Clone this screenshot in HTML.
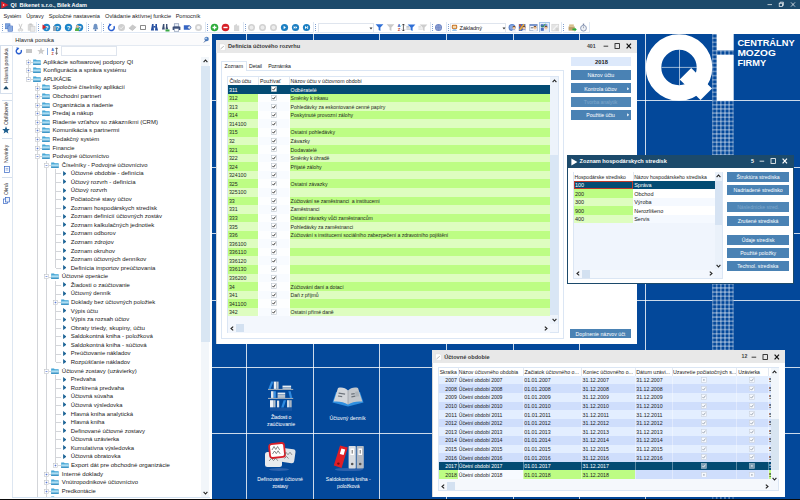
<!DOCTYPE html>
<html><head><meta charset="utf-8"><title>QI Bikenet s.r.o.</title>
<style>
html,body{margin:0;padding:0;width:800px;height:500px;overflow:hidden;background:#fff;}
body{position:relative;font-family:"Liberation Sans",sans-serif;}
div,svg{position:absolute;}
.t{white-space:nowrap;}
</style></head><body>
<div style="left:0.00px;top:0.00px;width:800.00px;height:500.00px;background:#ffffff;"></div>
<div style="left:0.00px;top:0.00px;width:800.00px;height:9.00px;background:#1c4a6b;"></div>
<svg style="left:1px;top:0.5px" width="8" height="8" viewBox="0 0 8 8"><path d="M0.3 0.2 L7.6 4 L0.3 7.8 Z" fill="#e0202a"/><circle cx="2.6" cy="4" r="0.8" fill="#fff"/></svg>
<div class="t" style="left:10.60px;top:-0.40px;height:10px;line-height:10px;font-size:5.54px;color:#fff;font-weight:bold;letter-spacing:0.000px;white-space:pre;">QI  Bikenet s.r.o., Bílek Adam</div>
<svg style="left:764px;top:0px" width="36" height="9" viewBox="0 0 36 9"><g stroke="#fff" stroke-width="0.7" fill="none"><path d="M3.5 4.6h4.5"/><rect x="15.2" y="3.2" width="3.2" height="3.2"/><path d="M16.2 3.2v-1h3.2v3.2h-1"/><path d="M27 2.4l4 4.2M31 2.4l-4 4.2"/></g></svg>
<div class="t" style="left:3.50px;top:10.80px;height:10px;line-height:10px;font-size:5.64px;color:#222;letter-spacing:-0.201px;">Systém</div>
<div class="t" style="left:26.20px;top:10.80px;height:10px;line-height:10px;font-size:5.64px;color:#222;letter-spacing:-0.053px;">Úpravy</div>
<div class="t" style="left:48.70px;top:10.80px;height:10px;line-height:10px;font-size:5.64px;color:#222;letter-spacing:-0.059px;">Spoločné nastavenia</div>
<div class="t" style="left:105.00px;top:10.80px;height:10px;line-height:10px;font-size:5.68px;color:#222;letter-spacing:0.000px;">Ovládanie aktívnej funkcie</div>
<div class="t" style="left:175.70px;top:10.80px;height:10px;line-height:10px;font-size:5.64px;color:#222;letter-spacing:-0.068px;">Pomocník</div>
<div style="left:1.50px;top:23.5px;width:1px;height:8px;background:repeating-linear-gradient(to bottom,#7f9fd0 0,#7f9fd0 1px,transparent 1px,transparent 2px);"></div>
<svg style="left:5px;top:23px" width="9" height="9" viewBox="0 0 9 9"><rect x="0.6" y="0.8" width="4.4" height="5" fill="#7fa6e0" stroke="#3f6fc0" stroke-width="0.6"/><rect x="3" y="3" width="4.6" height="5.2" fill="#a9c4ee" stroke="#3560b8" stroke-width="0.6"/><path d="M3.8 4.6h3M3.8 5.8h3M3.8 7h3" stroke="#3f6fc0" stroke-width="0.4"/></svg>
<svg style="left:15.5px;top:23px" width="9" height="9" viewBox="0 0 9 9"><path d="M3 0.8L5 6M6 0.8L4 6" stroke="#b8b8b8" stroke-width="0.7" fill="none"/><circle cx="3.2" cy="7" r="1" fill="none" stroke="#b8b8b8" stroke-width="0.6"/><circle cx="5.8" cy="7" r="1" fill="none" stroke="#b8b8b8" stroke-width="0.6"/></svg>
<svg style="left:26.5px;top:23px" width="9" height="9" viewBox="0 0 9 9"><rect x="0.8" y="1.2" width="5.5" height="6.5" fill="#d8d8d8"/><rect x="3.2" y="3.2" width="4.8" height="5" fill="#e9e9e9" stroke="#c4c4c4" stroke-width="0.5"/><rect x="2.3" y="0.5" width="2.5" height="1.5" fill="#c4c4c4"/></svg>
<div style="left:38.20px;top:23.5px;width:1px;height:8px;background:repeating-linear-gradient(to bottom,#7f9fd0 0,#7f9fd0 1px,transparent 1px,transparent 2px);"></div>
<svg style="left:42.20px;top:23.10px" width="9" height="9" viewBox="-4.5 -4.5 9 9"><circle r="3.7" fill="#1d84c8"/><text x="0" y="2.1" font-size="6" font-weight="bold" text-anchor="middle" fill="#fff" font-family="Liberation Sans,sans-serif">?</text></svg>
<svg style="left:53.00px;top:23.10px" width="9" height="9" viewBox="-4.5 -4.5 9 9"><circle r="3.7" fill="#1d84c8"/><text x="0" y="2.1" font-size="6" font-weight="bold" text-anchor="middle" fill="#fff" font-family="Liberation Sans,sans-serif">?</text></svg>
<svg style="left:63.80px;top:23.10px" width="9" height="9" viewBox="-4.5 -4.5 9 9"><circle r="3.7" fill="#1d84c8"/><text x="0" y="2.1" font-size="6" font-weight="bold" text-anchor="middle" fill="#fff" font-family="Liberation Sans,sans-serif">?</text></svg>
<svg style="left:74.80px;top:23.10px" width="9" height="9" viewBox="-4.5 -4.5 9 9"><circle r="3.7" fill="#1d84c8"/><text x="0" y="2.1" font-size="6" font-weight="bold" text-anchor="middle" fill="#fff" font-family="Liberation Sans,sans-serif">?</text></svg>
<svg style="left:41.5px;top:24px" width="5" height="6" viewBox="0 0 5 6"><path d="M0.5 0.5L4.5 3L0.5 5.5Z" fill="#d8232a"/></svg>
<div style="left:52.5px;top:25.5px;width:3.5px;height:5px;background:#9aa6b4;"></div>
<div style="left:75.5px;top:24.5px;width:3.4px;height:3.4px;border-radius:2px;background:#e9b98a;"></div><div style="left:75px;top:28px;width:4.4px;height:3px;border-radius:1.5px 1.5px 0 0;background:#58b04a;"></div>
<div style="left:87.50px;top:23.5px;width:1px;height:8px;background:repeating-linear-gradient(to bottom,#7f9fd0 0,#7f9fd0 1px,transparent 1px,transparent 2px);"></div>
<svg style="left:90.5px;top:23.2px" width="9" height="9" viewBox="0 0 9 9"><path d="M4.5 0.8C2.8 0.8 2.5 2.5 2.5 4.2L1.8 6.3H7.2L6.5 4.2C6.5 2.5 6.2 0.8 4.5 0.8Z" fill="#6f93c4"/><circle cx="4.5" cy="7.2" r="0.9" fill="#4b6fa5"/></svg>
<div style="left:103.20px;top:23.5px;width:1px;height:8px;background:repeating-linear-gradient(to bottom,#7f9fd0 0,#7f9fd0 1px,transparent 1px,transparent 2px);"></div>
<svg style="left:107px;top:23.2px" width="9" height="9" viewBox="0 0 9 9"><path d="M6.9 3.2A2.9 2.9 0 1 1 3.4 1.9" fill="none" stroke="#2a5fd0" stroke-width="1.5"/><path d="M1.8 0.6L4.8 1.2L2.6 3.6Z" fill="#2a5fd0"/></svg>
<svg style="left:117.20px;top:23.10px" width="9" height="9" viewBox="-4.5 -4.5 9 9"><circle r="3.5" fill="#cfcfcf"/><path d="M-1.6 0L-0.4 1.3L1.8 -1.2" stroke="#f4f4f4" stroke-width="0.9" fill="none"/></svg>
<svg style="left:128px;top:23.2px" width="9" height="9" viewBox="0 0 9 9"><path d="M0.8 5L4.5 1.5L8.2 4L4.5 7.5Z" fill="#c9c9c9"/><path d="M0.8 5L4.5 7.5L8.2 4" fill="none" stroke="#aaa" stroke-width="0.5"/></svg>
<div style="left:139.8px;top:24.6px;width:6.4px;height:5.6px;border:0.8px solid #8a8a8a;box-sizing:border-box;background:#fff;border-radius:0.8px"></div>
<svg style="left:150px;top:23.2px" width="9" height="9" viewBox="0 0 9 9"><path d="M2 1h1.6v2.5L4 7.6H0.9L1.6 3.5Z M5.4 1H7v2.5L8.1 7.6H5L5.4 3.5Z" fill="#254fa0"/><rect x="3.4" y="3" width="2.2" height="1.6" fill="#254fa0"/></svg>
<svg style="left:160.5px;top:23.2px" width="9" height="9" viewBox="0 0 9 9"><path d="M2 1h1.4v2.2L3.8 6.4H1L1.6 3.2Z M5 1h1.4v2.2L7.2 6.4H4.6L5 3.2Z" fill="#3a4f74"/><path d="M4.5 6.5h4v2h-4z" fill="#3aa845"/></svg>
<svg style="left:171.8px;top:23.2px" width="9" height="9" viewBox="0 0 9 9"><rect x="2.2" y="0.8" width="4.6" height="3" fill="#e8eef8" stroke="#5a6f95" stroke-width="0.5"/><rect x="0.6" y="3.4" width="7.8" height="3.6" rx="0.6" fill="#3d4f78"/><rect x="2.2" y="5.6" width="4.6" height="2.6" fill="#fff" stroke="#5a6f95" stroke-width="0.5"/></svg>
<svg style="left:183px;top:23.2px" width="9" height="9" viewBox="0 0 9 9"><path d="M0.8 2.2h5.5L8.4 4.5L6.3 6.8H0.8Z" fill="#3565c4"/><circle cx="6.3" cy="4.5" r="1.6" fill="#e8eef8" stroke="#27488f" stroke-width="0.5"/></svg>
<svg style="left:194.20px;top:23.10px" width="9" height="9" viewBox="-4.5 -4.5 9 9"><circle r="3.5" fill="#d4d4d4"/><circle r="1.7" fill="#f6f6f6"/></svg>
<div style="left:206.50px;top:23.5px;width:1px;height:8px;background:repeating-linear-gradient(to bottom,#7f9fd0 0,#7f9fd0 1px,transparent 1px,transparent 2px);"></div>
<svg style="left:209.70px;top:23.10px" width="9" height="9" viewBox="-4.5 -4.5 9 9"><circle r="3.8" fill="#2cab3a"/><path d="M-2 0H2M0 -2V2" stroke="#fff" stroke-width="1.3"/></svg>
<svg style="left:220.50px;top:23.10px" width="9" height="9" viewBox="-4.5 -4.5 9 9"><circle r="3.8" fill="#d62027"/><path d="M-2.1 0H2.1" stroke="#fff" stroke-width="1.4"/></svg>
<svg style="left:231.5px;top:23.2px" width="9" height="9" viewBox="0 0 9 9"><path d="M2 2.5L5 0.8V2.5H7.2V8H2Z" fill="#d6d6d6"/></svg>
<div style="left:244.50px;top:23.5px;width:1px;height:8px;background:repeating-linear-gradient(to bottom,#7f9fd0 0,#7f9fd0 1px,transparent 1px,transparent 2px);"></div>
<svg style="left:247.20px;top:23.10px" width="9" height="9" viewBox="-4.5 -4.5 9 9"><circle r="3.5" fill="#d2d2d2"/><circle r="1.9" fill="#ececec"/></svg>
<svg style="left:258.00px;top:23.10px" width="9" height="9" viewBox="-4.5 -4.5 9 9"><circle r="3.5" fill="#d2d2d2"/><circle r="1.9" fill="#ececec"/></svg>
<svg style="left:268.70px;top:23.10px" width="9" height="9" viewBox="-4.5 -4.5 9 9"><circle r="3.5" fill="#d2d2d2"/><circle r="1.9" fill="#ececec"/></svg>
<svg style="left:280.00px;top:23.10px" width="9" height="9" viewBox="-4.5 -4.5 9 9"><circle r="3.6" fill="#1c7fc2"/><path d="M-0.9 -1.7L1.4 0L-0.9 1.7Z" fill="#fff"/></svg>
<svg style="left:291.00px;top:23.10px" width="9" height="9" viewBox="-4.5 -4.5 9 9"><circle r="3.6" fill="#1c7fc2"/><path d="M-1.8 -1.5L-0.1 0L-1.8 1.5Z M0.1 -1.5L1.8 0L0.1 1.5Z" fill="#fff"/></svg>
<svg style="left:302.00px;top:23.10px" width="9" height="9" viewBox="-4.5 -4.5 9 9"><circle r="3.6" fill="#1c7fc2"/><path d="M-1.5 -1.5L0.6 0L-1.5 1.5Z M0.8 -1.5h0.8v3h-0.8z" fill="#fff"/></svg>
<div style="left:315.00px;top:23.5px;width:1px;height:8px;background:repeating-linear-gradient(to bottom,#7f9fd0 0,#7f9fd0 1px,transparent 1px,transparent 2px);"></div>
<div style="left:317.50px;top:22.60px;width:56.30px;height:10.00px;background:#fff;border:0.6px solid #dfe5ee;box-sizing:border-box;"></div>
<svg style="left:369px;top:26.6px" width="4" height="3" viewBox="0 0 4 3"><path d="M0.5 0.6L3.5 0.6L2 2.4Z" fill="#333"/></svg>
<svg style="left:374.70px;top:23.2px" width="9" height="9" viewBox="0 0 9 9"><path d="M0.6 1.2H8.4L5.4 4.6V8L3.6 7V4.6Z" fill="#2f6fd6"/></svg>
<svg style="left:386.00px;top:23.2px" width="9" height="9" viewBox="0 0 9 9"><path d="M0.6 1.2H8.4L5.4 4.6V8L3.6 7V4.6Z" fill="#c9c9c9"/></svg>
<svg style="left:397px;top:23.2px" width="9" height="9" viewBox="0 0 9 9"><text x="0.6" y="4" font-size="4.2" font-weight="bold" fill="#2f5fc0" font-family="Liberation Sans,sans-serif">A</text><text x="0.8" y="8.3" font-size="4.2" font-weight="bold" fill="#c0392b" font-family="Liberation Sans,sans-serif">Z</text><path d="M6.4 1V8M5.1 2.3L6.4 1L7.7 2.3M5.1 6.7L6.4 8L7.7 6.7" stroke="#222" stroke-width="0.7" fill="none"/></svg>
<svg style="left:406.2px;top:23.2px" width="10" height="9" viewBox="0 0 10 9"><path d="M1.6 1.6H9.4L6.6 4.6V8L4.6 7V4.6Z" fill="#2f6fd6"/><path d="M0.4 3.4h2.6M0.4 4.8h3.2M0.4 6.2h3.6" stroke="#8a93a0" stroke-width="0.6"/></svg>
<svg style="left:418px;top:23.2px" width="10" height="9" viewBox="0 0 10 9"><path d="M1.6 1.6H9.4L6.6 4.6V8L4.6 7V4.6Z" fill="#cdcdcd"/><path d="M0.4 3.4h2.6M0.4 4.8h3.2M0.4 6.2h3.6" stroke="#c4c4c4" stroke-width="0.6"/></svg>
<div style="left:431.50px;top:23.5px;width:1px;height:8px;background:repeating-linear-gradient(to bottom,#7f9fd0 0,#7f9fd0 1px,transparent 1px,transparent 2px);"></div>
<svg style="left:434.20px;top:23.10px" width="9" height="9" viewBox="-4.5 -4.5 9 9"><circle r="3.5" fill="#6f86c4"/><circle r="2.5" fill="#93a6d6"/><path d="M-2.4 0H2.4M0 -2.4V2.4" stroke="#6f86c4" stroke-width="0.5"/><ellipse rx="1.1" ry="2.4" fill="none" stroke="#6f86c4" stroke-width="0.4"/></svg>
<div style="left:447.50px;top:23.5px;width:1px;height:8px;background:repeating-linear-gradient(to bottom,#7f9fd0 0,#7f9fd0 1px,transparent 1px,transparent 2px);"></div>
<div style="left:450.00px;top:22.60px;width:56.00px;height:10.00px;background:#fff;border:0.6px solid #dfe5ee;box-sizing:border-box;"></div>
<svg style="left:451px;top:24.2px" width="7" height="7" viewBox="0 0 7 7"><rect x="0.8" y="0.8" width="5.4" height="4.2" rx="1.2" fill="#c9772a"/><rect x="1.8" y="1.8" width="3.4" height="2.4" rx="0.6" fill="#f3d9b0"/><path d="M1 6.6C1 5 6 5 6 6.6Z" fill="#3f8fd8"/></svg>
<div class="t" style="left:459.50px;top:22.60px;height:10px;line-height:10px;font-size:5.64px;color:#222;letter-spacing:-0.055px;">Základný</div>
<svg style="left:501.5px;top:26.6px" width="4" height="3" viewBox="0 0 4 3"><path d="M0.5 0.6L3.5 0.6L2 2.4Z" fill="#333"/></svg>
<svg style="left:508px;top:23.2px" width="9" height="9" viewBox="0 0 9 9"><circle cx="4" cy="4.4" r="3.5" fill="#5c84cc"/><circle cx="4" cy="4.4" r="2.4" fill="#86a8e0"/><circle cx="6" cy="4.9" r="1.5" fill="#f1c9a2"/><path d="M4.4 4.6C4.4 2.6 7.6 2.6 7.6 4.6C7 3.8 5 3.8 4.4 4.6Z" fill="#7a4a22"/><path d="M3.8 8.4C3.8 6.2 8.2 6.2 8.2 8.4Z" fill="#e8eef8"/></svg>
<svg style="left:518px;top:23.2px" width="9" height="9" viewBox="0 0 9 9"><rect x="0.8" y="1" width="6.6" height="7" fill="#4a6cc0"/><path d="M1 6.4L5.4 0.8L6.8 1.8L2.4 7.4Z" fill="#e9a93a"/><path d="M1 1.4h2v2h-2z" fill="#c8502a"/><circle cx="6" cy="4.9" r="1.5" fill="#f1c9a2"/><path d="M4.4 4.6C4.4 2.6 7.6 2.6 7.6 4.6C7 3.8 5 3.8 4.4 4.6Z" fill="#7a4a22"/><path d="M3.8 8.4C3.8 6.2 8.2 6.2 8.2 8.4Z" fill="#e8eef8"/></svg>
<svg style="left:529.2px;top:23.2px" width="9" height="9" viewBox="0 0 9 9"><rect x="0.8" y="1.4" width="7.4" height="6.4" fill="#f4f7fc" stroke="#7f93b8" stroke-width="0.6"/><rect x="0.8" y="1.4" width="7.4" height="1.4" fill="#5c7fc4"/><path d="M1.8 4.8h2.4" stroke="#333" stroke-width="0.7"/><circle cx="6" cy="4.9" r="1.5" fill="#f1c9a2"/><path d="M4.4 4.6C4.4 2.6 7.6 2.6 7.6 4.6C7 3.8 5 3.8 4.4 4.6Z" fill="#7a4a22"/><path d="M3.8 8.4C3.8 6.2 8.2 6.2 8.2 8.4Z" fill="#e8eef8"/></svg>
<div style="left:539.20px;top:22.40px;width:10.80px;height:10.60px;background:#e6f0fc;border:0.6px solid #a9c6ea;box-sizing:border-box;"></div>
<svg style="left:540.2px;top:23.2px" width="9" height="9" viewBox="0 0 9 9"><rect x="0.8" y="1.2" width="3" height="3" fill="#4a6cc0"/><rect x="0.8" y="4.8" width="3" height="3" fill="#4a6cc0"/><rect x="4.4" y="1.2" width="3" height="3" fill="#6f8fd4"/><path d="M1.2 2.6L2.6 4.2L5.4 0.8" stroke="#2a9a3a" stroke-width="1" fill="none"/><circle cx="6" cy="4.9" r="1.5" fill="#f1c9a2"/><path d="M4.4 4.6C4.4 2.6 7.6 2.6 7.6 4.6C7 3.8 5 3.8 4.4 4.6Z" fill="#7a4a22"/><path d="M3.8 8.4C3.8 6.2 8.2 6.2 8.2 8.4Z" fill="#e8eef8"/></svg>
<svg style="left:551px;top:23.2px" width="9" height="9" viewBox="0 0 9 9"><rect x="0.8" y="1.2" width="7" height="6.8" fill="#e4e4e4" stroke="#cfcfcf" stroke-width="0.5"/><path d="M2 6.8L6.6 2.2" stroke="#f6f6f6" stroke-width="1.2"/><rect x="4.6" y="4.8" width="3" height="3" fill="#d2d2d2"/></svg>
<div style="left:563.20px;top:23.5px;width:1px;height:8px;background:repeating-linear-gradient(to bottom,#7f9fd0 0,#7f9fd0 1px,transparent 1px,transparent 2px);"></div>
<svg style="left:567.5px;top:23.2px" width="9" height="9" viewBox="0 0 9 9"><rect x="0.6" y="3.4" width="6" height="4.2" fill="#c2a26e"/><rect x="1.2" y="1.4" width="4.6" height="2.2" fill="#d8c08e"/><path d="M0.6 5.2h6" stroke="#a88a58" stroke-width="0.4"/><path d="M4.4 5.6h2.2V4.4L8.8 6.4L6.6 8.4V7.2H4.4Z" fill="#2cab3a"/></svg>
<svg style="left:578.5px;top:23.2px" width="9" height="9" viewBox="0 0 9 9"><circle cx="4.5" cy="5.2" r="2.9" fill="#eef1f6" stroke="#8e9bb8" stroke-width="1"/><rect x="3.8" y="0.6" width="1.4" height="1.5" fill="#7a86a5"/><path d="M4.5 5.2V3.4" stroke="#5a6375" stroke-width="0.5"/></svg>
<div style="left:0.50px;top:22.00px;width:36.80px;height:11.20px;border:0.6px solid #dfe8f4;border-top:none;border-left:none;border-radius:0 0 1.5px 0;box-sizing:border-box;"></div>
<div style="left:38.00px;top:22.00px;width:48.50px;height:11.20px;border:0.6px solid #dfe8f4;border-top:none;border-left:none;border-radius:0 0 1.5px 0;box-sizing:border-box;"></div>
<div style="left:87.30px;top:22.00px;width:15.00px;height:11.20px;border:0.6px solid #dfe8f4;border-top:none;border-left:none;border-radius:0 0 1.5px 0;box-sizing:border-box;"></div>
<div style="left:103.00px;top:22.00px;width:102.60px;height:11.20px;border:0.6px solid #dfe8f4;border-top:none;border-left:none;border-radius:0 0 1.5px 0;box-sizing:border-box;"></div>
<div style="left:206.30px;top:22.00px;width:37.50px;height:11.20px;border:0.6px solid #dfe8f4;border-top:none;border-left:none;border-radius:0 0 1.5px 0;box-sizing:border-box;"></div>
<div style="left:244.40px;top:22.00px;width:69.80px;height:11.20px;border:0.6px solid #dfe8f4;border-top:none;border-left:none;border-radius:0 0 1.5px 0;box-sizing:border-box;"></div>
<div style="left:314.90px;top:22.00px;width:115.70px;height:11.20px;border:0.6px solid #dfe8f4;border-top:none;border-left:none;border-radius:0 0 1.5px 0;box-sizing:border-box;"></div>
<div style="left:431.30px;top:22.00px;width:15.30px;height:11.20px;border:0.6px solid #dfe8f4;border-top:none;border-left:none;border-radius:0 0 1.5px 0;box-sizing:border-box;"></div>
<div style="left:447.30px;top:22.00px;width:115.00px;height:11.20px;border:0.6px solid #dfe8f4;border-top:none;border-left:none;border-radius:0 0 1.5px 0;box-sizing:border-box;"></div>
<div style="left:563.00px;top:22.00px;width:27.00px;height:11.20px;border:0.6px solid #dfe8f4;border-top:none;border-left:none;border-radius:0 0 1.5px 0;box-sizing:border-box;"></div>
<div style="left:0.00px;top:44.70px;width:12.30px;height:0.60px;background:#d9e4f1;"></div>
<div style="left:0.00px;top:34.00px;width:12.30px;height:464.75px;background:#fff;"></div>
<div style="left:0.30px;top:45.00px;width:12.00px;height:49.00px;background:#fff;border:0.6px solid #d5dfec;border-right:none;box-sizing:border-box;"></div>
<div class="t" style="left:6.30px;top:82.90px;font-size:5.26px;letter-spacing:-0.027px;color:#333;transform-origin:0 0;transform:rotate(-90deg) translateY(-50%);line-height:8px;height:8px;">Hlavná ponuka</div>
<svg style="left:3.3px;top:84.5px" width="6" height="5" viewBox="0 0 6 5"><path d="M0.3 4.2L3 0.8L5.7 4.2Z" fill="#1c4a6b"/></svg>
<div class="t" style="left:6.30px;top:125.00px;font-size:5.26px;letter-spacing:-0.028px;color:#333;transform-origin:0 0;transform:rotate(-90deg) translateY(-50%);line-height:8px;height:8px;">Obľúbené</div>
<svg style="left:2.4px;top:126px" width="8" height="8" viewBox="0 0 8 8"><path d="M4 0.3L5.1 2.9L7.8 3.1L5.7 4.9L6.4 7.6L4 6.1L1.6 7.6L2.3 4.9L0.2 3.1L2.9 2.9Z" fill="#20608f"/></svg>
<div style="left:1.50px;top:99.60px;width:10.00px;height:0.50px;background:#d5dfec;"></div>
<div style="left:1.50px;top:137.50px;width:10.00px;height:0.50px;background:#d5dfec;"></div>
<div class="t" style="left:6.30px;top:163.30px;font-size:5.26px;letter-spacing:-0.070px;color:#333;transform-origin:0 0;transform:rotate(-90deg) translateY(-50%);line-height:8px;height:8px;">Novinky</div>
<svg style="left:3.6px;top:165.5px" width="6" height="7" viewBox="0 0 6 7"><rect x="0.6" y="0.6" width="4.8" height="5.8" fill="#fff" stroke="#3565c4" stroke-width="0.7"/><path d="M1.6 2.4h2.8M1.6 4h2.8" stroke="#3565c4" stroke-width="0.5"/></svg>
<div style="left:1.50px;top:177.00px;width:10.00px;height:0.50px;background:#d5dfec;"></div>
<div class="t" style="left:6.30px;top:195.00px;font-size:5.26px;letter-spacing:-0.194px;color:#333;transform-origin:0 0;transform:rotate(-90deg) translateY(-50%);line-height:8px;height:8px;">Okná</div>
<svg style="left:3px;top:196.5px" width="7" height="7" viewBox="0 0 7 7"><rect x="0.6" y="2" width="4" height="4.4" fill="#fff" stroke="#3565c4" stroke-width="0.7"/><rect x="2.4" y="0.6" width="4" height="4.4" fill="#eaf1fb" stroke="#3565c4" stroke-width="0.7"/></svg>
<div style="left:12.30px;top:34.20px;width:199.50px;height:10.80px;background:#fbfbfc;"></div>
<div class="t" style="left:15.30px;top:34.80px;height:10px;line-height:10px;font-size:5.80px;color:#222;">Hlavná ponuka</div>
<svg style="left:202.5px;top:35.5px" width="7" height="7" viewBox="0 0 7 7"><circle cx="3.6" cy="3" r="2.2" fill="#4f7fc0"/><path d="M1 6.4L3 4.4" stroke="#2a4f90" stroke-width="0.9"/><circle cx="3" cy="2.4" r="0.8" fill="#cfe0f5"/></svg>
<div style="left:12.30px;top:45.00px;width:199.50px;height:452.30px;background:#fff;border-left:0.6px solid #dde6f1;border-top:0.6px solid #e4eaf2;box-sizing:border-box;"></div>
<svg style="left:14.5px;top:47px" width="8" height="8" viewBox="0 0 9 9"><path d="M6.9 3.4A2.9 2.9 0 1 1 3.4 1.9" fill="none" stroke="#2a5fd0" stroke-width="1.6"/><path d="M1.6 0.4L4.9 1.2L2.6 3.8Z" fill="#2a5fd0"/></svg>
<div style="left:26.00px;top:48.50px;width:6.20px;height:4.80px;background:#c6c6c6;"></div>
<svg style="left:36.5px;top:47.4px" width="8" height="8" viewBox="0 0 8 8"><path d="M4 0.3L5.1 2.9L7.8 3.1L5.7 4.9L6.4 7.6L4 6.1L1.6 7.6L2.3 4.9L0.2 3.1L2.9 2.9Z" fill="#cdcdcd"/></svg>
<div style="left:47.30px;top:47.60px;width:0.80px;height:7.00px;background:#8fb0e0;"></div>
<svg style="left:51px;top:47px" width="8" height="8" viewBox="0 0 8 8"><text x="0.3" y="3.6" font-size="3.8" font-weight="bold" fill="#2f5fc0" font-family="Liberation Sans,sans-serif">A</text><text x="0.5" y="7.6" font-size="3.8" font-weight="bold" fill="#c0392b" font-family="Liberation Sans,sans-serif">Z</text><path d="M5.6 0.8V7.2M4.4 2L5.6 0.8L6.8 2M4.4 6L5.6 7.2L6.8 6" stroke="#222" stroke-width="0.6" fill="none"/></svg>
<div style="left:60.50px;top:46.30px;width:56.50px;height:9.60px;background:#fff;border:0.6px solid #dfe5ee;box-sizing:border-box;"></div>
<div style="left:201.20px;top:56.50px;width:8.20px;height:440.50px;background:#f2f6fa;"></div>
<div style="left:201.20px;top:65.80px;width:8.40px;height:275.80px;background:#d9e6f3;"></div>
<div style="left:209.60px;top:45.00px;width:0.80px;height:452.30px;background:#d3e2f2;"></div>
<svg style="left:203px;top:59px" width="5" height="4" viewBox="0 0 5 4"><path d="M0.6 3.2L2.5 1L4.4 3.2" stroke="#222" stroke-width="1.1" fill="none"/></svg>
<svg style="left:203px;top:490.5px" width="5" height="4" viewBox="0 0 5 4"><path d="M0.6 0.8L2.5 3L4.4 0.8" stroke="#222" stroke-width="1.1" fill="none"/></svg>
<div style="left:12.3px;top:56px;width:189px;height:441.2px;overflow:hidden;">
<svg width="0" height="0" style="left:0;top:0"><defs><linearGradient id="fd" x1="0" y1="0" x2="0" y2="1"><stop offset="0" stop-color="#62b9e1"/><stop offset="0.42" stop-color="#b2dff3"/><stop offset="1" stop-color="#2a88bd"/></linearGradient></defs></svg>
<div style="left:15.75px;top:2.75px;width:0.5px;height:20.16px;background:#d3d5d9;"></div>
<div style="left:24.85px;top:27.49px;width:0.5px;height:416.51px;background:#d3d5d9;"></div>
<div style="left:33.95px;top:104.71px;width:0.5px;height:339.29px;background:#d3d5d9;"></div>
<div style="left:43.05px;top:113.29px;width:0.5px;height:98.38px;background:#d3d5d9;"></div>
<div style="left:43.05px;top:224.83px;width:0.5px;height:81.22px;background:#d3d5d9;"></div>
<div style="left:43.05px;top:319.21px;width:0.5px;height:89.80px;background:#d3d5d9;"></div>
<div style="left:18.50px;top:6.10px;width:2.50px;height:0.5px;background:#d3d5d9;"></div>
<svg style="left:13.50px;top:3.85px" width="5" height="5" viewBox="0 0 5 5"><rect x="0.45" y="0.45" width="4.1" height="4.1" fill="#fff" stroke="#bcc0c6" stroke-width="0.55"/><path d="M1.55 2.5H3.45 M2.5 1.55V3.45" stroke="#4668cc" stroke-width="0.65"/></svg>
<svg style="left:20.70px;top:2.65px" width="8" height="6.4" viewBox="0 0 8 6.4"><path d="M0.2 0.5h2.8l0.7 0.8H7.6V5.9H0.2Z" fill="#3d9fd2"/><path d="M0.2 1.7H7.6V5.9H0.2Z" fill="url(#fd)"/></svg>
<div class="t" style="left:31.00px;top:0.75px;height:10px;line-height:10px;font-size:6.18px;color:#1a1a1a;letter-spacing:-0.000px;">Aplikácie softwarovej podpory QI</div>
<div style="left:18.50px;top:14.68px;width:2.50px;height:0.5px;background:#d3d5d9;"></div>
<svg style="left:13.50px;top:12.43px" width="5" height="5" viewBox="0 0 5 5"><rect x="0.45" y="0.45" width="4.1" height="4.1" fill="#fff" stroke="#bcc0c6" stroke-width="0.55"/><path d="M1.55 2.5H3.45 M2.5 1.55V3.45" stroke="#4668cc" stroke-width="0.65"/></svg>
<svg style="left:20.70px;top:11.23px" width="8" height="6.4" viewBox="0 0 8 6.4"><path d="M0.2 0.5h2.8l0.7 0.8H7.6V5.9H0.2Z" fill="#3d9fd2"/><path d="M0.2 1.7H7.6V5.9H0.2Z" fill="url(#fd)"/></svg>
<div class="t" style="left:31.00px;top:9.33px;height:10px;line-height:10px;font-size:6.07px;color:#1a1a1a;letter-spacing:-0.000px;">Konfigurácia a správa systému</div>
<div style="left:18.50px;top:23.26px;width:2.50px;height:0.5px;background:#d3d5d9;"></div>
<svg style="left:13.50px;top:21.01px" width="5" height="5" viewBox="0 0 5 5"><rect x="0.45" y="0.45" width="4.1" height="4.1" fill="#fff" stroke="#bcc0c6" stroke-width="0.55"/><path d="M1.55 2.5H3.45" stroke="#4668cc" stroke-width="0.65"/></svg>
<svg style="left:20.70px;top:19.81px" width="8" height="6.4" viewBox="0 0 8 6.4"><path d="M0.2 0.5h2.8l0.7 0.8H7.6V5.9H0.2Z" fill="#3d9fd2"/><path d="M0.2 1.7H7.6V5.9H0.2Z" fill="url(#fd)"/></svg>
<div class="t" style="left:31.00px;top:17.91px;height:10px;line-height:10px;font-size:5.64px;color:#1a1a1a;letter-spacing:-0.150px;">APLIKÁCIE</div>
<div style="left:27.60px;top:31.84px;width:2.50px;height:0.5px;background:#d3d5d9;"></div>
<svg style="left:22.60px;top:29.59px" width="5" height="5" viewBox="0 0 5 5"><rect x="0.45" y="0.45" width="4.1" height="4.1" fill="#fff" stroke="#bcc0c6" stroke-width="0.55"/><path d="M1.55 2.5H3.45 M2.5 1.55V3.45" stroke="#4668cc" stroke-width="0.65"/></svg>
<svg style="left:29.95px;top:28.39px" width="8" height="6.4" viewBox="0 0 8 6.4"><path d="M0.2 0.5h2.8l0.7 0.8H7.6V5.9H0.2Z" fill="#3d9fd2"/><path d="M0.2 1.7H7.6V5.9H0.2Z" fill="url(#fd)"/></svg>
<div class="t" style="left:40.25px;top:26.49px;height:10px;line-height:10px;font-size:5.92px;color:#1a1a1a;letter-spacing:0.000px;">Spoločné číselníky aplikácií</div>
<div style="left:27.60px;top:40.42px;width:2.50px;height:0.5px;background:#d3d5d9;"></div>
<svg style="left:22.60px;top:38.17px" width="5" height="5" viewBox="0 0 5 5"><rect x="0.45" y="0.45" width="4.1" height="4.1" fill="#fff" stroke="#bcc0c6" stroke-width="0.55"/><path d="M1.55 2.5H3.45 M2.5 1.55V3.45" stroke="#4668cc" stroke-width="0.65"/></svg>
<svg style="left:29.95px;top:36.97px" width="8" height="6.4" viewBox="0 0 8 6.4"><path d="M0.2 0.5h2.8l0.7 0.8H7.6V5.9H0.2Z" fill="#3d9fd2"/><path d="M0.2 1.7H7.6V5.9H0.2Z" fill="url(#fd)"/></svg>
<div class="t" style="left:40.25px;top:35.07px;height:10px;line-height:10px;font-size:6.08px;color:#1a1a1a;letter-spacing:-0.000px;">Obchodní partneri</div>
<div style="left:27.60px;top:49.00px;width:2.50px;height:0.5px;background:#d3d5d9;"></div>
<svg style="left:22.60px;top:46.75px" width="5" height="5" viewBox="0 0 5 5"><rect x="0.45" y="0.45" width="4.1" height="4.1" fill="#fff" stroke="#bcc0c6" stroke-width="0.55"/><path d="M1.55 2.5H3.45 M2.5 1.55V3.45" stroke="#4668cc" stroke-width="0.65"/></svg>
<svg style="left:29.95px;top:45.55px" width="8" height="6.4" viewBox="0 0 8 6.4"><path d="M0.2 0.5h2.8l0.7 0.8H7.6V5.9H0.2Z" fill="#3d9fd2"/><path d="M0.2 1.7H7.6V5.9H0.2Z" fill="url(#fd)"/></svg>
<div class="t" style="left:40.25px;top:43.65px;height:10px;line-height:10px;font-size:6.07px;color:#1a1a1a;letter-spacing:0.000px;">Organizácia a riadenie</div>
<div style="left:27.60px;top:57.58px;width:2.50px;height:0.5px;background:#d3d5d9;"></div>
<svg style="left:22.60px;top:55.33px" width="5" height="5" viewBox="0 0 5 5"><rect x="0.45" y="0.45" width="4.1" height="4.1" fill="#fff" stroke="#bcc0c6" stroke-width="0.55"/><path d="M1.55 2.5H3.45 M2.5 1.55V3.45" stroke="#4668cc" stroke-width="0.65"/></svg>
<svg style="left:29.95px;top:54.13px" width="8" height="6.4" viewBox="0 0 8 6.4"><path d="M0.2 0.5h2.8l0.7 0.8H7.6V5.9H0.2Z" fill="#3d9fd2"/><path d="M0.2 1.7H7.6V5.9H0.2Z" fill="url(#fd)"/></svg>
<div class="t" style="left:40.25px;top:52.23px;height:10px;line-height:10px;font-size:6.05px;color:#1a1a1a;letter-spacing:0.000px;">Predaj a nákup</div>
<div style="left:27.60px;top:66.16px;width:2.50px;height:0.5px;background:#d3d5d9;"></div>
<svg style="left:22.60px;top:63.91px" width="5" height="5" viewBox="0 0 5 5"><rect x="0.45" y="0.45" width="4.1" height="4.1" fill="#fff" stroke="#bcc0c6" stroke-width="0.55"/><path d="M1.55 2.5H3.45 M2.5 1.55V3.45" stroke="#4668cc" stroke-width="0.65"/></svg>
<svg style="left:29.95px;top:62.71px" width="8" height="6.4" viewBox="0 0 8 6.4"><path d="M0.2 0.5h2.8l0.7 0.8H7.6V5.9H0.2Z" fill="#3d9fd2"/><path d="M0.2 1.7H7.6V5.9H0.2Z" fill="url(#fd)"/></svg>
<div class="t" style="left:40.25px;top:60.81px;height:10px;line-height:10px;font-size:5.99px;color:#1a1a1a;letter-spacing:-0.000px;">Riadenie vzťahov so zákazníkmi (CRM)</div>
<div style="left:27.60px;top:74.74px;width:2.50px;height:0.5px;background:#d3d5d9;"></div>
<svg style="left:22.60px;top:72.49px" width="5" height="5" viewBox="0 0 5 5"><rect x="0.45" y="0.45" width="4.1" height="4.1" fill="#fff" stroke="#bcc0c6" stroke-width="0.55"/><path d="M1.55 2.5H3.45 M2.5 1.55V3.45" stroke="#4668cc" stroke-width="0.65"/></svg>
<svg style="left:29.95px;top:71.29px" width="8" height="6.4" viewBox="0 0 8 6.4"><path d="M0.2 0.5h2.8l0.7 0.8H7.6V5.9H0.2Z" fill="#3d9fd2"/><path d="M0.2 1.7H7.6V5.9H0.2Z" fill="url(#fd)"/></svg>
<div class="t" style="left:40.25px;top:69.39px;height:10px;line-height:10px;font-size:6.08px;color:#1a1a1a;letter-spacing:0.000px;">Komunikácia s partnermi</div>
<div style="left:27.60px;top:83.32px;width:2.50px;height:0.5px;background:#d3d5d9;"></div>
<svg style="left:22.60px;top:81.07px" width="5" height="5" viewBox="0 0 5 5"><rect x="0.45" y="0.45" width="4.1" height="4.1" fill="#fff" stroke="#bcc0c6" stroke-width="0.55"/><path d="M1.55 2.5H3.45 M2.5 1.55V3.45" stroke="#4668cc" stroke-width="0.65"/></svg>
<svg style="left:29.95px;top:79.87px" width="8" height="6.4" viewBox="0 0 8 6.4"><path d="M0.2 0.5h2.8l0.7 0.8H7.6V5.9H0.2Z" fill="#3d9fd2"/><path d="M0.2 1.7H7.6V5.9H0.2Z" fill="url(#fd)"/></svg>
<div class="t" style="left:40.25px;top:77.97px;height:10px;line-height:10px;font-size:5.92px;color:#1a1a1a;letter-spacing:0.000px;">Redakčný systém</div>
<div style="left:27.60px;top:91.90px;width:2.50px;height:0.5px;background:#d3d5d9;"></div>
<svg style="left:22.60px;top:89.65px" width="5" height="5" viewBox="0 0 5 5"><rect x="0.45" y="0.45" width="4.1" height="4.1" fill="#fff" stroke="#bcc0c6" stroke-width="0.55"/><path d="M1.55 2.5H3.45 M2.5 1.55V3.45" stroke="#4668cc" stroke-width="0.65"/></svg>
<svg style="left:29.95px;top:88.45px" width="8" height="6.4" viewBox="0 0 8 6.4"><path d="M0.2 0.5h2.8l0.7 0.8H7.6V5.9H0.2Z" fill="#3d9fd2"/><path d="M0.2 1.7H7.6V5.9H0.2Z" fill="url(#fd)"/></svg>
<div class="t" style="left:40.25px;top:86.55px;height:10px;line-height:10px;font-size:5.81px;color:#1a1a1a;letter-spacing:0.000px;">Financie</div>
<div style="left:27.60px;top:100.48px;width:2.50px;height:0.5px;background:#d3d5d9;"></div>
<svg style="left:22.60px;top:98.23px" width="5" height="5" viewBox="0 0 5 5"><rect x="0.45" y="0.45" width="4.1" height="4.1" fill="#fff" stroke="#bcc0c6" stroke-width="0.55"/><path d="M1.55 2.5H3.45" stroke="#4668cc" stroke-width="0.65"/></svg>
<svg style="left:29.95px;top:97.03px" width="8" height="6.4" viewBox="0 0 8 6.4"><path d="M0.2 0.5h2.8l0.7 0.8H7.6V5.9H0.2Z" fill="#3d9fd2"/><path d="M0.2 1.7H7.6V5.9H0.2Z" fill="url(#fd)"/></svg>
<div class="t" style="left:40.25px;top:95.13px;height:10px;line-height:10px;font-size:5.96px;color:#1a1a1a;letter-spacing:0.000px;">Podvojné účtovníctvo</div>
<div style="left:36.70px;top:109.06px;width:2.50px;height:0.5px;background:#d3d5d9;"></div>
<svg style="left:31.70px;top:106.81px" width="5" height="5" viewBox="0 0 5 5"><rect x="0.45" y="0.45" width="4.1" height="4.1" fill="#fff" stroke="#bcc0c6" stroke-width="0.55"/><path d="M1.55 2.5H3.45" stroke="#4668cc" stroke-width="0.65"/></svg>
<svg style="left:39.20px;top:105.61px" width="8" height="6.4" viewBox="0 0 8 6.4"><path d="M0.2 0.5h2.8l0.7 0.8H7.6V5.9H0.2Z" fill="#3d9fd2"/><path d="M0.2 1.7H7.6V5.9H0.2Z" fill="url(#fd)"/></svg>
<div class="t" style="left:49.50px;top:103.71px;height:10px;line-height:10px;font-size:5.91px;color:#1a1a1a;letter-spacing:0.000px;">Číselníky - Podvojné účtovníctvo</div>
<div style="left:43.30px;top:117.44px;width:5.60px;height:0.5px;background:#d3d5d9;"></div>
<svg style="left:50.30px;top:114.69px" width="3.6" height="5.2" viewBox="0 0 3.6 5.2"><path d="M0.1 0.1L3.4 2.6L0.1 5.1Z" fill="#1d6496"/></svg>
<div class="t" style="left:58.40px;top:112.29px;height:10px;line-height:10px;font-size:6.03px;color:#1a1a1a;letter-spacing:0.000px;">Účtovné obdobie - definícia</div>
<div style="left:43.30px;top:126.02px;width:5.60px;height:0.5px;background:#d3d5d9;"></div>
<svg style="left:50.30px;top:123.27px" width="3.6" height="5.2" viewBox="0 0 3.6 5.2"><path d="M0.1 0.1L3.4 2.6L0.1 5.1Z" fill="#1d6496"/></svg>
<div class="t" style="left:58.40px;top:120.87px;height:10px;line-height:10px;font-size:6.06px;color:#1a1a1a;letter-spacing:0.000px;">Účtový rozvrh - definícia</div>
<div style="left:43.30px;top:134.60px;width:5.60px;height:0.5px;background:#d3d5d9;"></div>
<svg style="left:50.30px;top:131.85px" width="3.6" height="5.2" viewBox="0 0 3.6 5.2"><path d="M0.1 0.1L3.4 2.6L0.1 5.1Z" fill="#1d6496"/></svg>
<div class="t" style="left:58.40px;top:129.45px;height:10px;line-height:10px;font-size:5.94px;color:#1a1a1a;letter-spacing:0.000px;">Účtový rozvrh</div>
<div style="left:43.30px;top:143.18px;width:5.60px;height:0.5px;background:#d3d5d9;"></div>
<svg style="left:50.30px;top:140.43px" width="3.6" height="5.2" viewBox="0 0 3.6 5.2"><path d="M0.1 0.1L3.4 2.6L0.1 5.1Z" fill="#1d6496"/></svg>
<div class="t" style="left:58.40px;top:138.03px;height:10px;line-height:10px;font-size:5.97px;color:#1a1a1a;letter-spacing:0.000px;">Počiatočné stavy účtov</div>
<div style="left:43.30px;top:151.76px;width:5.60px;height:0.5px;background:#d3d5d9;"></div>
<svg style="left:50.30px;top:149.01px" width="3.6" height="5.2" viewBox="0 0 3.6 5.2"><path d="M0.1 0.1L3.4 2.6L0.1 5.1Z" fill="#1d6496"/></svg>
<div class="t" style="left:58.40px;top:146.61px;height:10px;line-height:10px;font-size:6.00px;color:#1a1a1a;letter-spacing:0.000px;">Zoznam hospodárskych stredísk</div>
<div style="left:43.30px;top:160.34px;width:5.60px;height:0.5px;background:#d3d5d9;"></div>
<svg style="left:50.30px;top:157.59px" width="3.6" height="5.2" viewBox="0 0 3.6 5.2"><path d="M0.1 0.1L3.4 2.6L0.1 5.1Z" fill="#1d6496"/></svg>
<div class="t" style="left:58.40px;top:155.19px;height:10px;line-height:10px;font-size:5.97px;color:#1a1a1a;letter-spacing:0.000px;">Zoznam definícií účtovných zostáv</div>
<div style="left:43.30px;top:168.92px;width:5.60px;height:0.5px;background:#d3d5d9;"></div>
<svg style="left:50.30px;top:166.17px" width="3.6" height="5.2" viewBox="0 0 3.6 5.2"><path d="M0.1 0.1L3.4 2.6L0.1 5.1Z" fill="#1d6496"/></svg>
<div class="t" style="left:58.40px;top:163.77px;height:10px;line-height:10px;font-size:6.03px;color:#1a1a1a;letter-spacing:-0.000px;">Zoznam kalkulačných jednotiek</div>
<div style="left:43.30px;top:177.50px;width:5.60px;height:0.5px;background:#d3d5d9;"></div>
<svg style="left:50.30px;top:174.75px" width="3.6" height="5.2" viewBox="0 0 3.6 5.2"><path d="M0.1 0.1L3.4 2.6L0.1 5.1Z" fill="#1d6496"/></svg>
<div class="t" style="left:58.40px;top:172.35px;height:10px;line-height:10px;font-size:6.00px;color:#1a1a1a;letter-spacing:0.000px;">Zoznam odborov</div>
<div style="left:43.30px;top:186.08px;width:5.60px;height:0.5px;background:#d3d5d9;"></div>
<svg style="left:50.30px;top:183.33px" width="3.6" height="5.2" viewBox="0 0 3.6 5.2"><path d="M0.1 0.1L3.4 2.6L0.1 5.1Z" fill="#1d6496"/></svg>
<div class="t" style="left:58.40px;top:180.93px;height:10px;line-height:10px;font-size:6.05px;color:#1a1a1a;letter-spacing:0.000px;">Zoznam zdrojov</div>
<div style="left:43.30px;top:194.66px;width:5.60px;height:0.5px;background:#d3d5d9;"></div>
<svg style="left:50.30px;top:191.91px" width="3.6" height="5.2" viewBox="0 0 3.6 5.2"><path d="M0.1 0.1L3.4 2.6L0.1 5.1Z" fill="#1d6496"/></svg>
<div class="t" style="left:58.40px;top:189.51px;height:10px;line-height:10px;font-size:5.95px;color:#1a1a1a;letter-spacing:0.000px;">Zoznam okruhov</div>
<div style="left:43.30px;top:203.24px;width:5.60px;height:0.5px;background:#d3d5d9;"></div>
<svg style="left:50.30px;top:200.49px" width="3.6" height="5.2" viewBox="0 0 3.6 5.2"><path d="M0.1 0.1L3.4 2.6L0.1 5.1Z" fill="#1d6496"/></svg>
<div class="t" style="left:58.40px;top:198.09px;height:10px;line-height:10px;font-size:5.94px;color:#1a1a1a;letter-spacing:0.000px;">Zoznam účtovných denníkov</div>
<div style="left:43.30px;top:211.82px;width:5.60px;height:0.5px;background:#d3d5d9;"></div>
<svg style="left:50.30px;top:209.07px" width="3.6" height="5.2" viewBox="0 0 3.6 5.2"><path d="M0.1 0.1L3.4 2.6L0.1 5.1Z" fill="#1d6496"/></svg>
<div class="t" style="left:58.40px;top:206.67px;height:10px;line-height:10px;font-size:6.05px;color:#1a1a1a;letter-spacing:0.000px;">Definícia importov preúčtovania</div>
<div style="left:36.70px;top:220.60px;width:2.50px;height:0.5px;background:#d3d5d9;"></div>
<svg style="left:31.70px;top:218.35px" width="5" height="5" viewBox="0 0 5 5"><rect x="0.45" y="0.45" width="4.1" height="4.1" fill="#fff" stroke="#bcc0c6" stroke-width="0.55"/><path d="M1.55 2.5H3.45" stroke="#4668cc" stroke-width="0.65"/></svg>
<svg style="left:39.20px;top:217.15px" width="8" height="6.4" viewBox="0 0 8 6.4"><path d="M0.2 0.5h2.8l0.7 0.8H7.6V5.9H0.2Z" fill="#3d9fd2"/><path d="M0.2 1.7H7.6V5.9H0.2Z" fill="url(#fd)"/></svg>
<div class="t" style="left:49.50px;top:215.25px;height:10px;line-height:10px;font-size:5.94px;color:#1a1a1a;letter-spacing:-0.000px;">Účtovné operácie</div>
<div style="left:43.30px;top:228.98px;width:5.60px;height:0.5px;background:#d3d5d9;"></div>
<svg style="left:50.30px;top:226.23px" width="3.6" height="5.2" viewBox="0 0 3.6 5.2"><path d="M0.1 0.1L3.4 2.6L0.1 5.1Z" fill="#1d6496"/></svg>
<div class="t" style="left:58.40px;top:223.83px;height:10px;line-height:10px;font-size:5.96px;color:#1a1a1a;letter-spacing:0.000px;">Žiadosti o zaúčtovanie</div>
<div style="left:43.30px;top:237.56px;width:5.60px;height:0.5px;background:#d3d5d9;"></div>
<svg style="left:50.30px;top:234.81px" width="3.6" height="5.2" viewBox="0 0 3.6 5.2"><path d="M0.1 0.1L3.4 2.6L0.1 5.1Z" fill="#1d6496"/></svg>
<div class="t" style="left:58.40px;top:232.41px;height:10px;line-height:10px;font-size:5.81px;color:#1a1a1a;letter-spacing:0.000px;">Účtovný denník</div>
<div style="left:45.80px;top:246.34px;width:2.50px;height:0.5px;background:#d3d5d9;"></div>
<svg style="left:40.80px;top:244.09px" width="5" height="5" viewBox="0 0 5 5"><rect x="0.45" y="0.45" width="4.1" height="4.1" fill="#fff" stroke="#bcc0c6" stroke-width="0.55"/><path d="M1.55 2.5H3.45 M2.5 1.55V3.45" stroke="#4668cc" stroke-width="0.65"/></svg>
<svg style="left:48.45px;top:242.89px" width="8" height="6.4" viewBox="0 0 8 6.4"><path d="M0.2 0.5h2.8l0.7 0.8H7.6V5.9H0.2Z" fill="#3d9fd2"/><path d="M0.2 1.7H7.6V5.9H0.2Z" fill="url(#fd)"/></svg>
<div class="t" style="left:58.75px;top:240.99px;height:10px;line-height:10px;font-size:5.93px;color:#1a1a1a;letter-spacing:0.000px;">Doklady bez účtovných položiek</div>
<div style="left:43.30px;top:254.72px;width:5.60px;height:0.5px;background:#d3d5d9;"></div>
<svg style="left:50.30px;top:251.97px" width="3.6" height="5.2" viewBox="0 0 3.6 5.2"><path d="M0.1 0.1L3.4 2.6L0.1 5.1Z" fill="#1d6496"/></svg>
<div class="t" style="left:58.40px;top:249.57px;height:10px;line-height:10px;font-size:5.92px;color:#1a1a1a;letter-spacing:0.000px;">Výpis účtu</div>
<div style="left:43.30px;top:263.30px;width:5.60px;height:0.5px;background:#d3d5d9;"></div>
<svg style="left:50.30px;top:260.55px" width="3.6" height="5.2" viewBox="0 0 3.6 5.2"><path d="M0.1 0.1L3.4 2.6L0.1 5.1Z" fill="#1d6496"/></svg>
<div class="t" style="left:58.40px;top:258.15px;height:10px;line-height:10px;font-size:6.02px;color:#1a1a1a;letter-spacing:0.000px;">Výpis za rozsah účtov</div>
<div style="left:43.30px;top:271.88px;width:5.60px;height:0.5px;background:#d3d5d9;"></div>
<svg style="left:50.30px;top:269.13px" width="3.6" height="5.2" viewBox="0 0 3.6 5.2"><path d="M0.1 0.1L3.4 2.6L0.1 5.1Z" fill="#1d6496"/></svg>
<div class="t" style="left:58.40px;top:266.73px;height:10px;line-height:10px;font-size:6.21px;color:#1a1a1a;letter-spacing:0.000px;">Obraty triedy, skupiny, účtu</div>
<div style="left:43.30px;top:280.46px;width:5.60px;height:0.5px;background:#d3d5d9;"></div>
<svg style="left:50.30px;top:277.71px" width="3.6" height="5.2" viewBox="0 0 3.6 5.2"><path d="M0.1 0.1L3.4 2.6L0.1 5.1Z" fill="#1d6496"/></svg>
<div class="t" style="left:58.40px;top:275.31px;height:10px;line-height:10px;font-size:6.04px;color:#1a1a1a;letter-spacing:0.000px;">Saldokontná kniha - položková</div>
<div style="left:43.30px;top:289.04px;width:5.60px;height:0.5px;background:#d3d5d9;"></div>
<svg style="left:50.30px;top:286.29px" width="3.6" height="5.2" viewBox="0 0 3.6 5.2"><path d="M0.1 0.1L3.4 2.6L0.1 5.1Z" fill="#1d6496"/></svg>
<div class="t" style="left:58.40px;top:283.89px;height:10px;line-height:10px;font-size:6.05px;color:#1a1a1a;letter-spacing:0.000px;">Saldokontná kniha - súčtová</div>
<div style="left:43.30px;top:297.62px;width:5.60px;height:0.5px;background:#d3d5d9;"></div>
<svg style="left:50.30px;top:294.87px" width="3.6" height="5.2" viewBox="0 0 3.6 5.2"><path d="M0.1 0.1L3.4 2.6L0.1 5.1Z" fill="#1d6496"/></svg>
<div class="t" style="left:58.40px;top:292.47px;height:10px;line-height:10px;font-size:5.91px;color:#1a1a1a;letter-spacing:0.000px;">Preúčtovanie nákladov</div>
<div style="left:43.30px;top:306.20px;width:5.60px;height:0.5px;background:#d3d5d9;"></div>
<svg style="left:50.30px;top:303.45px" width="3.6" height="5.2" viewBox="0 0 3.6 5.2"><path d="M0.1 0.1L3.4 2.6L0.1 5.1Z" fill="#1d6496"/></svg>
<div class="t" style="left:58.40px;top:301.05px;height:10px;line-height:10px;font-size:5.97px;color:#1a1a1a;letter-spacing:0.000px;">Rozpúšťanie nákladov</div>
<div style="left:36.70px;top:314.98px;width:2.50px;height:0.5px;background:#d3d5d9;"></div>
<svg style="left:31.70px;top:312.73px" width="5" height="5" viewBox="0 0 5 5"><rect x="0.45" y="0.45" width="4.1" height="4.1" fill="#fff" stroke="#bcc0c6" stroke-width="0.55"/><path d="M1.55 2.5H3.45" stroke="#4668cc" stroke-width="0.65"/></svg>
<svg style="left:39.20px;top:311.53px" width="8" height="6.4" viewBox="0 0 8 6.4"><path d="M0.2 0.5h2.8l0.7 0.8H7.6V5.9H0.2Z" fill="#3d9fd2"/><path d="M0.2 1.7H7.6V5.9H0.2Z" fill="url(#fd)"/></svg>
<div class="t" style="left:49.50px;top:309.63px;height:10px;line-height:10px;font-size:6.01px;color:#1a1a1a;letter-spacing:0.000px;">Účtovné zostavy (uzávierky)</div>
<div style="left:43.30px;top:323.36px;width:5.60px;height:0.5px;background:#d3d5d9;"></div>
<svg style="left:50.30px;top:320.61px" width="3.6" height="5.2" viewBox="0 0 3.6 5.2"><path d="M0.1 0.1L3.4 2.6L0.1 5.1Z" fill="#1d6496"/></svg>
<div class="t" style="left:58.40px;top:318.21px;height:10px;line-height:10px;font-size:5.85px;color:#1a1a1a;letter-spacing:0.000px;">Predvaha</div>
<div style="left:43.30px;top:331.94px;width:5.60px;height:0.5px;background:#d3d5d9;"></div>
<svg style="left:50.30px;top:329.19px" width="3.6" height="5.2" viewBox="0 0 3.6 5.2"><path d="M0.1 0.1L3.4 2.6L0.1 5.1Z" fill="#1d6496"/></svg>
<div class="t" style="left:58.40px;top:326.79px;height:10px;line-height:10px;font-size:5.95px;color:#1a1a1a;letter-spacing:0.000px;">Rozšírená predvaha</div>
<div style="left:43.30px;top:340.52px;width:5.60px;height:0.5px;background:#d3d5d9;"></div>
<svg style="left:50.30px;top:337.77px" width="3.6" height="5.2" viewBox="0 0 3.6 5.2"><path d="M0.1 0.1L3.4 2.6L0.1 5.1Z" fill="#1d6496"/></svg>
<div class="t" style="left:58.40px;top:335.37px;height:10px;line-height:10px;font-size:5.90px;color:#1a1a1a;letter-spacing:0.000px;">Účtovná súvaha</div>
<div style="left:43.30px;top:349.10px;width:5.60px;height:0.5px;background:#d3d5d9;"></div>
<svg style="left:50.30px;top:346.35px" width="3.6" height="5.2" viewBox="0 0 3.6 5.2"><path d="M0.1 0.1L3.4 2.6L0.1 5.1Z" fill="#1d6496"/></svg>
<div class="t" style="left:58.40px;top:343.95px;height:10px;line-height:10px;font-size:5.82px;color:#1a1a1a;letter-spacing:0.000px;">Účtovná výsledovka</div>
<div style="left:43.30px;top:357.68px;width:5.60px;height:0.5px;background:#d3d5d9;"></div>
<svg style="left:50.30px;top:354.93px" width="3.6" height="5.2" viewBox="0 0 3.6 5.2"><path d="M0.1 0.1L3.4 2.6L0.1 5.1Z" fill="#1d6496"/></svg>
<div class="t" style="left:58.40px;top:352.53px;height:10px;line-height:10px;font-size:5.95px;color:#1a1a1a;letter-spacing:0.000px;">Hlavná kniha analytická</div>
<div style="left:43.30px;top:366.26px;width:5.60px;height:0.5px;background:#d3d5d9;"></div>
<svg style="left:50.30px;top:363.51px" width="3.6" height="5.2" viewBox="0 0 3.6 5.2"><path d="M0.1 0.1L3.4 2.6L0.1 5.1Z" fill="#1d6496"/></svg>
<div class="t" style="left:58.40px;top:361.11px;height:10px;line-height:10px;font-size:5.85px;color:#1a1a1a;letter-spacing:0.000px;">Hlavná kniha</div>
<div style="left:43.30px;top:374.84px;width:5.60px;height:0.5px;background:#d3d5d9;"></div>
<svg style="left:50.30px;top:372.09px" width="3.6" height="5.2" viewBox="0 0 3.6 5.2"><path d="M0.1 0.1L3.4 2.6L0.1 5.1Z" fill="#1d6496"/></svg>
<div class="t" style="left:58.40px;top:369.69px;height:10px;line-height:10px;font-size:5.94px;color:#1a1a1a;letter-spacing:0.000px;">Definované účtovné zostavy</div>
<div style="left:43.30px;top:383.42px;width:5.60px;height:0.5px;background:#d3d5d9;"></div>
<svg style="left:50.30px;top:380.67px" width="3.6" height="5.2" viewBox="0 0 3.6 5.2"><path d="M0.1 0.1L3.4 2.6L0.1 5.1Z" fill="#1d6496"/></svg>
<div class="t" style="left:58.40px;top:378.27px;height:10px;line-height:10px;font-size:5.90px;color:#1a1a1a;letter-spacing:0.000px;">Účtovná uzávierka</div>
<div style="left:43.30px;top:392.00px;width:5.60px;height:0.5px;background:#d3d5d9;"></div>
<svg style="left:50.30px;top:389.25px" width="3.6" height="5.2" viewBox="0 0 3.6 5.2"><path d="M0.1 0.1L3.4 2.6L0.1 5.1Z" fill="#1d6496"/></svg>
<div class="t" style="left:58.40px;top:386.85px;height:10px;line-height:10px;font-size:5.89px;color:#1a1a1a;letter-spacing:0.000px;">Kumulatívna výsledovka</div>
<div style="left:43.30px;top:400.58px;width:5.60px;height:0.5px;background:#d3d5d9;"></div>
<svg style="left:50.30px;top:397.83px" width="3.6" height="5.2" viewBox="0 0 3.6 5.2"><path d="M0.1 0.1L3.4 2.6L0.1 5.1Z" fill="#1d6496"/></svg>
<div class="t" style="left:58.40px;top:395.43px;height:10px;line-height:10px;font-size:5.97px;color:#1a1a1a;letter-spacing:0.000px;">Účtovná obratovka</div>
<div style="left:45.80px;top:409.36px;width:2.50px;height:0.5px;background:#d3d5d9;"></div>
<svg style="left:40.80px;top:407.11px" width="5" height="5" viewBox="0 0 5 5"><rect x="0.45" y="0.45" width="4.1" height="4.1" fill="#fff" stroke="#bcc0c6" stroke-width="0.55"/><path d="M1.55 2.5H3.45 M2.5 1.55V3.45" stroke="#4668cc" stroke-width="0.65"/></svg>
<svg style="left:48.45px;top:405.91px" width="8" height="6.4" viewBox="0 0 8 6.4"><path d="M0.2 0.5h2.8l0.7 0.8H7.6V5.9H0.2Z" fill="#3d9fd2"/><path d="M0.2 1.7H7.6V5.9H0.2Z" fill="url(#fd)"/></svg>
<div class="t" style="left:58.75px;top:404.01px;height:10px;line-height:10px;font-size:6.05px;color:#1a1a1a;letter-spacing:-0.000px;">Export dát pre obchodné organizácie</div>
<div style="left:36.70px;top:417.94px;width:2.50px;height:0.5px;background:#d3d5d9;"></div>
<svg style="left:31.70px;top:415.69px" width="5" height="5" viewBox="0 0 5 5"><rect x="0.45" y="0.45" width="4.1" height="4.1" fill="#fff" stroke="#bcc0c6" stroke-width="0.55"/><path d="M1.55 2.5H3.45 M2.5 1.55V3.45" stroke="#4668cc" stroke-width="0.65"/></svg>
<svg style="left:39.20px;top:414.49px" width="8" height="6.4" viewBox="0 0 8 6.4"><path d="M0.2 0.5h2.8l0.7 0.8H7.6V5.9H0.2Z" fill="#3d9fd2"/><path d="M0.2 1.7H7.6V5.9H0.2Z" fill="url(#fd)"/></svg>
<div class="t" style="left:49.50px;top:412.59px;height:10px;line-height:10px;font-size:6.06px;color:#1a1a1a;letter-spacing:0.000px;">Interné doklady</div>
<div style="left:36.70px;top:426.52px;width:2.50px;height:0.5px;background:#d3d5d9;"></div>
<svg style="left:31.70px;top:424.27px" width="5" height="5" viewBox="0 0 5 5"><rect x="0.45" y="0.45" width="4.1" height="4.1" fill="#fff" stroke="#bcc0c6" stroke-width="0.55"/><path d="M1.55 2.5H3.45 M2.5 1.55V3.45" stroke="#4668cc" stroke-width="0.65"/></svg>
<svg style="left:39.20px;top:423.07px" width="8" height="6.4" viewBox="0 0 8 6.4"><path d="M0.2 0.5h2.8l0.7 0.8H7.6V5.9H0.2Z" fill="#3d9fd2"/><path d="M0.2 1.7H7.6V5.9H0.2Z" fill="url(#fd)"/></svg>
<div class="t" style="left:49.50px;top:421.17px;height:10px;line-height:10px;font-size:5.95px;color:#1a1a1a;letter-spacing:-0.000px;">Vnútropodnikové účtovníctvo</div>
<div style="left:36.70px;top:435.10px;width:2.50px;height:0.5px;background:#d3d5d9;"></div>
<svg style="left:31.70px;top:432.85px" width="5" height="5" viewBox="0 0 5 5"><rect x="0.45" y="0.45" width="4.1" height="4.1" fill="#fff" stroke="#bcc0c6" stroke-width="0.55"/><path d="M1.55 2.5H3.45 M2.5 1.55V3.45" stroke="#4668cc" stroke-width="0.65"/></svg>
<svg style="left:39.20px;top:431.65px" width="8" height="6.4" viewBox="0 0 8 6.4"><path d="M0.2 0.5h2.8l0.7 0.8H7.6V5.9H0.2Z" fill="#3d9fd2"/><path d="M0.2 1.7H7.6V5.9H0.2Z" fill="url(#fd)"/></svg>
<div class="t" style="left:49.50px;top:429.75px;height:10px;line-height:10px;font-size:5.82px;color:#1a1a1a;letter-spacing:-0.000px;">Predkontácie</div>
<div style="left:36.70px;top:443.68px;width:2.50px;height:0.5px;background:#d3d5d9;"></div>
<svg style="left:31.70px;top:441.43px" width="5" height="5" viewBox="0 0 5 5"><rect x="0.45" y="0.45" width="4.1" height="4.1" fill="#fff" stroke="#bcc0c6" stroke-width="0.55"/><path d="M1.55 2.5H3.45 M2.5 1.55V3.45" stroke="#4668cc" stroke-width="0.65"/></svg>
<svg style="left:39.20px;top:440.23px" width="8" height="6.4" viewBox="0 0 8 6.4"><path d="M0.2 0.5h2.8l0.7 0.8H7.6V5.9H0.2Z" fill="#3d9fd2"/><path d="M0.2 1.7H7.6V5.9H0.2Z" fill="url(#fd)"/></svg>
<div class="t" style="left:49.50px;top:438.33px;height:10px;line-height:10px;font-size:6.00px;color:#1a1a1a;">Dane z pridanej hodnoty</div>
</div>
<div style="left:210.40px;top:34.00px;width:1.80px;height:464.75px;background:#fff;"></div>
<div style="left:12.30px;top:497.00px;width:198.00px;height:0.60px;background:#d3e2f2;"></div>
<div style="left:212.2px;top:34px;width:587.8px;height:464.75px;background:#03489a;overflow:hidden;">
<div style="left:33.83px;top:0.00px;width:0.64px;height:470.00px;background:rgba(255,255,255,0.8);"></div>
<div style="left:100.58px;top:0.00px;width:0.64px;height:470.00px;background:rgba(255,255,255,0.8);"></div>
<div style="left:167.18px;top:0.00px;width:0.64px;height:470.00px;background:rgba(255,255,255,0.8);"></div>
<div style="left:233.83px;top:0.00px;width:0.64px;height:470.00px;background:rgba(255,255,255,0.8);"></div>
<div style="left:300.48px;top:0.00px;width:0.64px;height:470.00px;background:rgba(255,255,255,0.8);"></div>
<div style="left:366.98px;top:0.00px;width:0.64px;height:470.00px;background:rgba(255,255,255,0.8);"></div>
<div style="left:433.28px;top:0.00px;width:0.64px;height:470.00px;background:rgba(255,255,255,0.8);"></div>
<div style="left:0.00px;top:66.18px;width:600.00px;height:0.64px;background:rgba(255,255,255,0.8);"></div>
<div style="left:0.00px;top:132.78px;width:600.00px;height:0.64px;background:rgba(255,255,255,0.8);"></div>
<div style="left:0.00px;top:199.38px;width:600.00px;height:0.64px;background:rgba(255,255,255,0.8);"></div>
<div style="left:0.00px;top:265.98px;width:600.00px;height:0.64px;background:rgba(255,255,255,0.8);"></div>
<div style="left:0.00px;top:332.58px;width:600.00px;height:0.64px;background:rgba(255,255,255,0.8);"></div>
<div style="left:0.00px;top:398.88px;width:600.00px;height:0.64px;background:rgba(255,255,255,0.8);"></div>
<svg style="left:500.10px;top:0px" width="22" height="466" viewBox="712.3 34 22 466"><defs><pattern id="fg" x="712.8" y="34" width="4.163" height="4.163" patternUnits="userSpaceOnUse"><rect x="0" y="0" width="4.163" height="4.163" fill="#fff"/><rect x="0.3" y="0.3" width="3.563" height="3.563" fill="#03489a"/></pattern></defs><rect x="712.5" y="34" width="4.763" height="67" fill="url(#fg)"/><rect x="712.5" y="100.3" width="21.415" height="400" fill="url(#fg)"/><rect x="716.9" y="50.352" width="16.8" height="4.763" fill="url(#fg)"/></svg>
<svg style="left:427.8px;top:0px" width="160" height="80" viewBox="640 34 160 80"><circle cx="679" cy="67.5" r="25.5" fill="none" stroke="#fff" stroke-width="15.6"/><path d="M679.5 49.8V85.2M661.5 67.4H697" stroke="#fff" stroke-width="0.6"/><path d="M691.2 68.1L712 88.6L700.5 100L679.7 79.6Z" fill="#fff"/><rect x="716.9" y="34" width="16.8" height="16.4" fill="#fff"/><rect x="716.9" y="55" width="16.8" height="45.9" fill="#fff"/><g font-family="Liberation Sans,sans-serif" font-weight="bold" font-size="9.2" fill="#fff"><text x="737.4" y="46.1" textLength="57.2" lengthAdjust="spacingAndGlyphs" transform="translate(0 46.1) scale(1 1.06) translate(0 -46.1)">CENTRÁLNY</text><text x="737.4" y="56.3" textLength="38.4" lengthAdjust="spacingAndGlyphs" transform="translate(0 56.3) scale(1 1.06) translate(0 -56.3)">MOZOG</text><text x="737.4" y="66.5" textLength="28.8" lengthAdjust="spacingAndGlyphs" transform="translate(0 66.5) scale(1 1.06) translate(0 -66.5)">FIRMY</text></g></svg>
<div class="t" style="left:28.90px;top:380.10px;width:80px;text-align:center;font-size:5.17px;letter-spacing:-0.213px;line-height:7px;height:7px;color:#fff;">Žiadosti o</div>
<div class="t" style="left:28.90px;top:386.55px;width:80px;text-align:center;font-size:5.25px;letter-spacing:0.000px;line-height:7px;height:7px;color:#fff;">zaúčtovanie</div>
<div class="t" style="left:95.40px;top:381.30px;width:80px;text-align:center;font-size:5.22px;letter-spacing:0.000px;line-height:7px;height:7px;color:#fff;">Účtovný denník</div>
<div class="t" style="left:27.90px;top:442.20px;width:80px;text-align:center;font-size:5.20px;letter-spacing:-0.000px;line-height:7px;height:7px;color:#fff;">Definované účtovné</div>
<div class="t" style="left:27.90px;top:448.65px;width:80px;text-align:center;font-size:5.17px;letter-spacing:-0.255px;line-height:7px;height:7px;color:#fff;">zostavy</div>
<div class="t" style="left:96.10px;top:442.20px;width:80px;text-align:center;font-size:5.17px;letter-spacing:-0.039px;line-height:7px;height:7px;color:#fff;">Saldokontná kniha -</div>
<div class="t" style="left:96.10px;top:448.65px;width:80px;text-align:center;font-size:5.17px;letter-spacing:-0.098px;line-height:7px;height:7px;color:#fff;">položková</div>
<svg style="left:53.80000000000001px;top:346px" width="30" height="32" viewBox="0 0 30 32"><rect x="2" y="8.9" width="25.2" height="1.1" fill="#9aa9ba"/><rect x="2" y="17.9" width="25.2" height="1.1" fill="#9aa9ba"/><path d="M5.2 1.6h2.3L4.6 8.9H2.3Z" fill="#2f8ae0"/><rect x="7.8" y="1.6" width="2.5" height="7.3" fill="#eef1f5"/><rect x="10.4" y="1.6" width="2.2" height="7.3" fill="#b4bfcb"/><rect x="16.5" y="5.6" width="8.6" height="1.6" fill="#e9edf2"/><rect x="16.5" y="7.3" width="8.6" height="1.6" fill="#bcc6d1"/><rect x="5" y="11.2" width="2.6" height="6.7" fill="#e3e8ee"/><rect x="7.8" y="11.2" width="2" height="6.7" fill="#3f95e4"/><rect x="11.6" y="12.6" width="7.6" height="1.7" fill="#e9edf2"/><rect x="11.6" y="14.4" width="7.6" height="3.5" fill="#b9c3ce"/><path d="M22.4 11.2h2.3L26.2 17.9h-2.3Z" fill="#2f8ae0"/><rect x="4" y="20.2" width="3" height="7.2" fill="#eef1f5"/><rect x="7.1" y="20.2" width="2.4" height="7.2" fill="#b4bfcb"/><rect x="11" y="20.6" width="2.2" height="6.8" fill="#dfe5ec"/><path d="M17.6 20.2h2.4L17.6 27.4h-2.4Z" fill="#2f8ae0"/><rect x="21" y="20.2" width="2.6" height="7.2" fill="#d5dce5"/><rect x="23.7" y="20.2" width="2" height="7.2" fill="#aab5c2"/><rect x="4" y="27.8" width="22" height="3" fill="#2a5ea8" opacity="0.55"/></svg>
<svg style="left:118.80000000000001px;top:351px" width="34" height="24" viewBox="0 0 34 24"><path d="M1.5 17.5L5 7L17 9L29 7L32.5 17.5L17 21.5Z" fill="#2f8fe0"/><path d="M2.6 16.6L7 3C11 2 14.5 3 17 5.6V19.4C13 17 8 16 2.6 16.6Z" fill="#d3d6da"/><path d="M31.4 16.6L27 3C23 2 19.5 3 17 5.6V19.4C21 17 26 16 31.4 16.6Z" fill="#c3c7cc"/><path d="M17 5.6V19.4" stroke="#8e949b" stroke-width="0.6"/><path d="M7.6 8.2l6.5 0.9M7 11l4.2 0.6M20.2 9.1l3.5-0.5M20.4 11.8l4-0.6" stroke="#6d747c" stroke-width="1.2"/><rect x="24.4" y="6.6" width="3.4" height="5" fill="#aeb4ba" transform="rotate(-8 26 9)"/></svg>
<svg style="left:50.80000000000001px;top:408px" width="36" height="30" viewBox="0 0 36 30"><ellipse cx="16" cy="27.5" rx="10" ry="1.5" fill="#2d62ad"/><rect x="2" y="10" width="17" height="15" rx="2.5" fill="#e9ebee"/><rect x="17" y="6.5" width="15" height="14" rx="2.5" fill="#e1e4e8" transform="rotate(8 24 13)"/><rect x="6.5" y="1.5" width="15" height="14" rx="2.5" fill="#fff" stroke="#d8202a" stroke-width="1.8" transform="rotate(-6 14 8)"/><path d="M9 8l2-3.5 1.8 3 1.8-3 2 3.4M9.5 12l2-3 1.8 2.6 1.8-2.8 2 3" stroke="#555" stroke-width="0.7" fill="none"/><path d="M6 19l2.5-2.6 2 2.2 2.2-2.4 2.2 2.6M21 13l2-2.6 2 2.3 2-2.4 2 2.6M21.5 16.5l2-2 2 2" stroke="#666" stroke-width="0.7" fill="none"/></svg>
<svg style="left:118.80000000000001px;top:410px" width="36" height="28" viewBox="0 0 36 28"><ellipse cx="18" cy="25.5" rx="14" ry="1.6" fill="#2d62ad"/><path d="M9 1.5L16.8 3.6L10.6 24L2.8 21.6Z" fill="#e01e26"/><path d="M10.4 4.4L14.2 5.5L12.6 11L8.8 9.9Z" fill="#fff"/><rect x="17.6" y="2" width="7.2" height="22.5" rx="0.8" fill="#d9dde2"/><rect x="25.6" y="2" width="7.2" height="22.5" rx="0.8" fill="#b4bbc4"/><rect x="19.4" y="4.5" width="3.6" height="6.5" fill="#fff"/><rect x="27.4" y="4.5" width="3.6" height="6.5" fill="#fff"/><path d="M21.2 6v3.6M29.2 6v3.6" stroke="#444" stroke-width="0.8"/><circle cx="21.2" cy="20" r="1.3" fill="#555"/><circle cx="29.2" cy="20" r="1.3" fill="#555"/><circle cx="7.4" cy="19.6" r="1.2" fill="#7a0c12"/></svg>
<div style="left:3.80px;top:5.50px;width:421.30px;height:304.80px;background:#fff;border-left:0.8px solid #d9d9d9;box-sizing:border-box;"></div>
<div style="left:3.80px;top:5.50px;width:421.30px;height:13.20px;background:#e8e8e8;"></div>
<svg style="left:6.400000000000006px;top:8.5px" width="7" height="8" viewBox="0 0 7 8"><path d="M0.5 0.8H4.6L6.4 2.6V7.4H0.5Z" fill="#fff" stroke="#d2d2d2" stroke-width="0.4"/><path d="M1.5 6L4.8 3.2" stroke="#9a9a9a" stroke-width="0.7"/></svg>
<div class="t" style="left:15.80px;top:7.40px;height:10px;line-height:10px;font-size:5.63px;color:#3a3a3a;font-weight:bold;letter-spacing:0.000px;">Definícia účtového rozvrhu</div>
<div class="t" style="left:374.80px;top:7.20px;height:10px;line-height:10px;font-size:5.20px;color:#444;font-weight:bold;">401</div>
<svg style="left:390.5px;top:8.2px" width="30" height="8" viewBox="0 0 30 8"><g stroke="#111" stroke-width="0.8" fill="none"><path d="M0.6 4.2H5.2"/><rect x="12" y="1.6" width="4.4" height="4.8"/><path d="M23.6 1.6l4.4 4.8M28 1.6L23.6 6.4" stroke-width="1.2"/></g></svg>
<div style="left:9.10px;top:36.00px;width:343.20px;height:268.50px;background:#fff;border:0.6px solid #dbe6f4;box-sizing:border-box;"></div>
<div style="left:9.10px;top:26.60px;width:25.40px;height:10.00px;background:#fff;border:0.6px solid #dbe6f4;border-bottom:none;box-sizing:border-box;border-radius:1px 1px 0 0;"></div>
<div class="t" style="left:12.40px;top:26.70px;height:10px;line-height:10px;font-size:5.17px;color:#222;letter-spacing:-0.055px;">Zoznam</div>
<div class="t" style="left:36.80px;top:26.70px;height:10px;line-height:10px;font-size:5.17px;color:#222;letter-spacing:-0.044px;">Detail</div>
<div class="t" style="left:56.10px;top:26.70px;height:10px;line-height:10px;font-size:5.17px;color:#222;letter-spacing:-0.247px;">Poznámka</div>
<div style="left:15.20px;top:41.90px;width:331.60px;height:257.60px;background:#f3f7fd;border:0.6px solid #dbe6f4;box-sizing:border-box;"></div>
<div style="left:15.80px;top:42.60px;width:322.00px;height:8.50px;background:#fff;"></div>
<div style="left:45.50px;top:42.60px;width:0.60px;height:8.50px;background:#e3e9f2;"></div>
<div style="left:77.10px;top:42.60px;width:0.60px;height:8.50px;background:#e3e9f2;"></div>
<div class="t" style="left:17.20px;top:41.90px;height:10px;line-height:10px;font-size:5.17px;color:#222;letter-spacing:-0.121px;">Číslo účtu</div>
<div class="t" style="left:47.80px;top:41.90px;height:10px;line-height:10px;font-size:5.22px;color:#222;letter-spacing:0.000px;">Používať</div>
<div class="t" style="left:78.40px;top:41.90px;height:10px;line-height:10px;font-size:5.20px;color:#222;letter-spacing:-0.000px;">Názov účtu v účtovnom období</div>
<div style="left:15.80px;top:51.25px;width:322.00px;height:8.56px;background:#034b73;"></div>
<div class="t" style="left:16.70px;top:50.63px;height:10px;line-height:10px;font-size:5.49px;color:#fff;letter-spacing:0.000px;">311</div>
<div class="t" style="left:78.40px;top:50.63px;height:10px;line-height:10px;font-size:5.29px;color:#fff;letter-spacing:0.000px;white-space:pre;">Odběratelé</div>
<svg style="left:58.90px;top:52.43px" width="5.8" height="5.8" viewBox="0 0 5.8 5.8"><rect x="0.3" y="0.3" width="5.2" height="5.2" fill="#fff" stroke="#bcc5ce" stroke-width="0.6"/><path d="M1.35 2.9L2.55 4.15L4.5 1.6" stroke="#2e2e2e" stroke-width="0.95" fill="none"/></svg>
<div style="left:15.80px;top:59.81px;width:30.00px;height:8.56px;background:#bdfd84;"></div>
<div style="left:45.80px;top:59.81px;width:31.60px;height:8.56px;background:#fdfeff;"></div>
<div style="left:77.40px;top:59.81px;width:260.40px;height:8.56px;background:#bdfd84;"></div>
<div class="t" style="left:16.70px;top:59.19px;height:10px;line-height:10px;font-size:5.25px;color:#1d2a1d;letter-spacing:0.000px;">312</div>
<div class="t" style="left:78.40px;top:59.19px;height:10px;line-height:10px;font-size:5.17px;color:#1d2a1d;letter-spacing:-0.102px;white-space:pre;">Směnky k inkasu</div>
<svg style="left:58.90px;top:60.99px" width="5.8" height="5.8" viewBox="0 0 5.8 5.8"><rect x="0.3" y="0.3" width="5.2" height="5.2" fill="#fff" stroke="#bcc5ce" stroke-width="0.6"/><path d="M1.35 2.9L2.55 4.15L4.5 1.6" stroke="#2e2e2e" stroke-width="0.95" fill="none"/></svg>
<div style="left:15.80px;top:68.37px;width:30.00px;height:8.56px;background:#defdc0;"></div>
<div style="left:45.80px;top:68.37px;width:31.60px;height:8.56px;background:#f8fbff;"></div>
<div style="left:77.40px;top:68.37px;width:260.40px;height:8.56px;background:#defdc0;"></div>
<div class="t" style="left:16.70px;top:67.75px;height:10px;line-height:10px;font-size:5.25px;color:#1d2a1d;letter-spacing:0.000px;">313</div>
<div class="t" style="left:78.40px;top:67.75px;height:10px;line-height:10px;font-size:5.17px;color:#1d2a1d;letter-spacing:-0.022px;white-space:pre;">Pohledávky za eskontované cenné papíry</div>
<svg style="left:58.90px;top:69.55px" width="5.8" height="5.8" viewBox="0 0 5.8 5.8"><rect x="0.3" y="0.3" width="5.2" height="5.2" fill="#fff" stroke="#bcc5ce" stroke-width="0.6"/><path d="M1.35 2.9L2.55 4.15L4.5 1.6" stroke="#2e2e2e" stroke-width="0.95" fill="none"/></svg>
<div style="left:15.80px;top:76.93px;width:30.00px;height:8.56px;background:#bdfd84;"></div>
<div style="left:45.80px;top:76.93px;width:31.60px;height:8.56px;background:#fdfeff;"></div>
<div style="left:77.40px;top:76.93px;width:260.40px;height:8.56px;background:#bdfd84;"></div>
<div class="t" style="left:16.70px;top:76.31px;height:10px;line-height:10px;font-size:5.25px;color:#1d2a1d;letter-spacing:0.000px;">314</div>
<div class="t" style="left:78.40px;top:76.31px;height:10px;line-height:10px;font-size:5.17px;color:#1d2a1d;letter-spacing:-0.023px;white-space:pre;">Poskytnuté provozní zálohy</div>
<svg style="left:58.90px;top:78.11px" width="5.8" height="5.8" viewBox="0 0 5.8 5.8"><rect x="0.3" y="0.3" width="5.2" height="5.2" fill="#fff" stroke="#bcc5ce" stroke-width="0.6"/><path d="M1.35 2.9L2.55 4.15L4.5 1.6" stroke="#2e2e2e" stroke-width="0.95" fill="none"/></svg>
<div style="left:15.80px;top:85.49px;width:30.00px;height:8.56px;background:#defdc0;"></div>
<div style="left:45.80px;top:85.49px;width:31.60px;height:8.56px;background:#f8fbff;"></div>
<div style="left:77.40px;top:85.49px;width:260.40px;height:8.56px;background:#defdc0;"></div>
<div class="t" style="left:16.70px;top:84.87px;height:10px;line-height:10px;font-size:5.25px;color:#1d2a1d;letter-spacing:0.000px;">314100</div>
<svg style="left:58.90px;top:86.67px" width="5.8" height="5.8" viewBox="0 0 5.8 5.8"><rect x="0.3" y="0.3" width="5.2" height="5.2" fill="#fff" stroke="#bcc5ce" stroke-width="0.6"/><path d="M1.35 2.9L2.55 4.15L4.5 1.6" stroke="#2e2e2e" stroke-width="0.95" fill="none"/></svg>
<div style="left:15.80px;top:94.05px;width:30.00px;height:8.56px;background:#bdfd84;"></div>
<div style="left:45.80px;top:94.05px;width:31.60px;height:8.56px;background:#fdfeff;"></div>
<div style="left:77.40px;top:94.05px;width:260.40px;height:8.56px;background:#bdfd84;"></div>
<div class="t" style="left:16.70px;top:93.43px;height:10px;line-height:10px;font-size:5.25px;color:#1d2a1d;letter-spacing:0.000px;">315</div>
<div class="t" style="left:78.40px;top:93.43px;height:10px;line-height:10px;font-size:5.19px;color:#1d2a1d;letter-spacing:0.000px;white-space:pre;">Ostatní pohledávky</div>
<svg style="left:58.90px;top:95.23px" width="5.8" height="5.8" viewBox="0 0 5.8 5.8"><rect x="0.3" y="0.3" width="5.2" height="5.2" fill="#fff" stroke="#bcc5ce" stroke-width="0.6"/><path d="M1.35 2.9L2.55 4.15L4.5 1.6" stroke="#2e2e2e" stroke-width="0.95" fill="none"/></svg>
<div style="left:15.80px;top:102.61px;width:30.00px;height:8.56px;background:#defdc0;"></div>
<div style="left:45.80px;top:102.61px;width:31.60px;height:8.56px;background:#f8fbff;"></div>
<div style="left:77.40px;top:102.61px;width:260.40px;height:8.56px;background:#defdc0;"></div>
<div class="t" style="left:16.70px;top:101.99px;height:10px;line-height:10px;font-size:5.25px;color:#1d2a1d;letter-spacing:0.000px;">32</div>
<div class="t" style="left:78.40px;top:101.99px;height:10px;line-height:10px;font-size:5.21px;color:#1d2a1d;letter-spacing:0.000px;white-space:pre;">Závazky</div>
<svg style="left:58.90px;top:103.79px" width="5.8" height="5.8" viewBox="0 0 5.8 5.8"><rect x="0.3" y="0.3" width="5.2" height="5.2" fill="#fff" stroke="#bcc5ce" stroke-width="0.6"/><path d="M1.35 2.9L2.55 4.15L4.5 1.6" stroke="#2e2e2e" stroke-width="0.95" fill="none"/></svg>
<div style="left:15.80px;top:111.17px;width:30.00px;height:8.56px;background:#bdfd84;"></div>
<div style="left:45.80px;top:111.17px;width:31.60px;height:8.56px;background:#fdfeff;"></div>
<div style="left:77.40px;top:111.17px;width:260.40px;height:8.56px;background:#bdfd84;"></div>
<div class="t" style="left:16.70px;top:110.55px;height:10px;line-height:10px;font-size:5.25px;color:#1d2a1d;letter-spacing:0.000px;">321</div>
<div class="t" style="left:78.40px;top:110.55px;height:10px;line-height:10px;font-size:5.22px;color:#1d2a1d;letter-spacing:0.000px;white-space:pre;">Dodavatelé</div>
<svg style="left:58.90px;top:112.35px" width="5.8" height="5.8" viewBox="0 0 5.8 5.8"><rect x="0.3" y="0.3" width="5.2" height="5.2" fill="#fff" stroke="#bcc5ce" stroke-width="0.6"/><path d="M1.35 2.9L2.55 4.15L4.5 1.6" stroke="#2e2e2e" stroke-width="0.95" fill="none"/></svg>
<div style="left:15.80px;top:119.73px;width:30.00px;height:8.56px;background:#defdc0;"></div>
<div style="left:45.80px;top:119.73px;width:31.60px;height:8.56px;background:#f8fbff;"></div>
<div style="left:77.40px;top:119.73px;width:260.40px;height:8.56px;background:#defdc0;"></div>
<div class="t" style="left:16.70px;top:119.11px;height:10px;line-height:10px;font-size:5.25px;color:#1d2a1d;letter-spacing:0.000px;">322</div>
<div class="t" style="left:78.40px;top:119.11px;height:10px;line-height:10px;font-size:5.17px;color:#1d2a1d;letter-spacing:-0.095px;white-space:pre;">Směnky k úhradě</div>
<svg style="left:58.90px;top:120.91px" width="5.8" height="5.8" viewBox="0 0 5.8 5.8"><rect x="0.3" y="0.3" width="5.2" height="5.2" fill="#fff" stroke="#bcc5ce" stroke-width="0.6"/><path d="M1.35 2.9L2.55 4.15L4.5 1.6" stroke="#2e2e2e" stroke-width="0.95" fill="none"/></svg>
<div style="left:15.80px;top:128.29px;width:30.00px;height:8.56px;background:#bdfd84;"></div>
<div style="left:45.80px;top:128.29px;width:31.60px;height:8.56px;background:#fdfeff;"></div>
<div style="left:77.40px;top:128.29px;width:260.40px;height:8.56px;background:#bdfd84;"></div>
<div class="t" style="left:16.70px;top:127.67px;height:10px;line-height:10px;font-size:5.25px;color:#1d2a1d;letter-spacing:0.000px;">324</div>
<div class="t" style="left:78.40px;top:127.67px;height:10px;line-height:10px;font-size:5.19px;color:#1d2a1d;letter-spacing:0.000px;white-space:pre;">Přijaté zálohy</div>
<svg style="left:58.90px;top:129.47px" width="5.8" height="5.8" viewBox="0 0 5.8 5.8"><rect x="0.3" y="0.3" width="5.2" height="5.2" fill="#fff" stroke="#bcc5ce" stroke-width="0.6"/><path d="M1.35 2.9L2.55 4.15L4.5 1.6" stroke="#2e2e2e" stroke-width="0.95" fill="none"/></svg>
<div style="left:15.80px;top:136.85px;width:30.00px;height:8.56px;background:#defdc0;"></div>
<div style="left:45.80px;top:136.85px;width:31.60px;height:8.56px;background:#f8fbff;"></div>
<div style="left:77.40px;top:136.85px;width:260.40px;height:8.56px;background:#defdc0;"></div>
<div class="t" style="left:16.70px;top:136.23px;height:10px;line-height:10px;font-size:5.25px;color:#1d2a1d;letter-spacing:0.000px;">324100</div>
<svg style="left:58.90px;top:138.03px" width="5.8" height="5.8" viewBox="0 0 5.8 5.8"><rect x="0.3" y="0.3" width="5.2" height="5.2" fill="#fff" stroke="#bcc5ce" stroke-width="0.6"/><path d="M1.35 2.9L2.55 4.15L4.5 1.6" stroke="#2e2e2e" stroke-width="0.95" fill="none"/></svg>
<div style="left:15.80px;top:145.41px;width:30.00px;height:8.56px;background:#bdfd84;"></div>
<div style="left:45.80px;top:145.41px;width:31.60px;height:8.56px;background:#fdfeff;"></div>
<div style="left:77.40px;top:145.41px;width:260.40px;height:8.56px;background:#bdfd84;"></div>
<div class="t" style="left:16.70px;top:144.79px;height:10px;line-height:10px;font-size:5.25px;color:#1d2a1d;letter-spacing:0.000px;">325</div>
<div class="t" style="left:78.40px;top:144.79px;height:10px;line-height:10px;font-size:5.19px;color:#1d2a1d;letter-spacing:0.000px;white-space:pre;">Ostatní závazky</div>
<svg style="left:58.90px;top:146.59px" width="5.8" height="5.8" viewBox="0 0 5.8 5.8"><rect x="0.3" y="0.3" width="5.2" height="5.2" fill="#fff" stroke="#bcc5ce" stroke-width="0.6"/><path d="M1.35 2.9L2.55 4.15L4.5 1.6" stroke="#2e2e2e" stroke-width="0.95" fill="none"/></svg>
<div style="left:15.80px;top:153.97px;width:30.00px;height:8.56px;background:#defdc0;"></div>
<div style="left:45.80px;top:153.97px;width:31.60px;height:8.56px;background:#f8fbff;"></div>
<div style="left:77.40px;top:153.97px;width:260.40px;height:8.56px;background:#defdc0;"></div>
<div class="t" style="left:16.70px;top:153.35px;height:10px;line-height:10px;font-size:5.25px;color:#1d2a1d;letter-spacing:0.000px;">325100</div>
<svg style="left:58.90px;top:155.15px" width="5.8" height="5.8" viewBox="0 0 5.8 5.8"><rect x="0.3" y="0.3" width="5.2" height="5.2" fill="#fff" stroke="#bcc5ce" stroke-width="0.6"/><path d="M1.35 2.9L2.55 4.15L4.5 1.6" stroke="#2e2e2e" stroke-width="0.95" fill="none"/></svg>
<div style="left:15.80px;top:162.53px;width:30.00px;height:8.56px;background:#bdfd84;"></div>
<div style="left:45.80px;top:162.53px;width:31.60px;height:8.56px;background:#fdfeff;"></div>
<div style="left:77.40px;top:162.53px;width:260.40px;height:8.56px;background:#bdfd84;"></div>
<div class="t" style="left:16.70px;top:161.91px;height:10px;line-height:10px;font-size:5.25px;color:#1d2a1d;letter-spacing:0.000px;">33</div>
<div class="t" style="left:78.40px;top:161.91px;height:10px;line-height:10px;font-size:5.17px;color:#1d2a1d;letter-spacing:-0.060px;white-space:pre;">Zúčtování se zaměstnanci  a institucemi</div>
<svg style="left:58.90px;top:163.71px" width="5.8" height="5.8" viewBox="0 0 5.8 5.8"><rect x="0.3" y="0.3" width="5.2" height="5.2" fill="#fff" stroke="#bcc5ce" stroke-width="0.6"/><path d="M1.35 2.9L2.55 4.15L4.5 1.6" stroke="#2e2e2e" stroke-width="0.95" fill="none"/></svg>
<div style="left:15.80px;top:171.09px;width:30.00px;height:8.56px;background:#defdc0;"></div>
<div style="left:45.80px;top:171.09px;width:31.60px;height:8.56px;background:#f8fbff;"></div>
<div style="left:77.40px;top:171.09px;width:260.40px;height:8.56px;background:#defdc0;"></div>
<div class="t" style="left:16.70px;top:170.47px;height:10px;line-height:10px;font-size:5.25px;color:#1d2a1d;letter-spacing:0.000px;">331</div>
<div class="t" style="left:78.40px;top:170.47px;height:10px;line-height:10px;font-size:5.17px;color:#1d2a1d;letter-spacing:-0.070px;white-space:pre;">Zaměstnanci</div>
<svg style="left:58.90px;top:172.27px" width="5.8" height="5.8" viewBox="0 0 5.8 5.8"><rect x="0.3" y="0.3" width="5.2" height="5.2" fill="#fff" stroke="#bcc5ce" stroke-width="0.6"/><path d="M1.35 2.9L2.55 4.15L4.5 1.6" stroke="#2e2e2e" stroke-width="0.95" fill="none"/></svg>
<div style="left:15.80px;top:179.65px;width:30.00px;height:8.56px;background:#bdfd84;"></div>
<div style="left:45.80px;top:179.65px;width:31.60px;height:8.56px;background:#fdfeff;"></div>
<div style="left:77.40px;top:179.65px;width:260.40px;height:8.56px;background:#bdfd84;"></div>
<div class="t" style="left:16.70px;top:179.03px;height:10px;line-height:10px;font-size:5.25px;color:#1d2a1d;letter-spacing:0.000px;">333</div>
<div class="t" style="left:78.40px;top:179.03px;height:10px;line-height:10px;font-size:5.17px;color:#1d2a1d;letter-spacing:-0.047px;white-space:pre;">Ostatní závazky vůči zaměstnancům</div>
<svg style="left:58.90px;top:180.83px" width="5.8" height="5.8" viewBox="0 0 5.8 5.8"><rect x="0.3" y="0.3" width="5.2" height="5.2" fill="#fff" stroke="#bcc5ce" stroke-width="0.6"/><path d="M1.35 2.9L2.55 4.15L4.5 1.6" stroke="#2e2e2e" stroke-width="0.95" fill="none"/></svg>
<div style="left:15.80px;top:188.21px;width:30.00px;height:8.56px;background:#defdc0;"></div>
<div style="left:45.80px;top:188.21px;width:31.60px;height:8.56px;background:#f8fbff;"></div>
<div style="left:77.40px;top:188.21px;width:260.40px;height:8.56px;background:#defdc0;"></div>
<div class="t" style="left:16.70px;top:187.59px;height:10px;line-height:10px;font-size:5.25px;color:#1d2a1d;letter-spacing:0.000px;">335</div>
<div class="t" style="left:78.40px;top:187.59px;height:10px;line-height:10px;font-size:5.17px;color:#1d2a1d;letter-spacing:-0.060px;white-space:pre;">Pohledávky za zaměstnanci</div>
<svg style="left:58.90px;top:189.39px" width="5.8" height="5.8" viewBox="0 0 5.8 5.8"><rect x="0.3" y="0.3" width="5.2" height="5.2" fill="#fff" stroke="#bcc5ce" stroke-width="0.6"/><path d="M1.35 2.9L2.55 4.15L4.5 1.6" stroke="#2e2e2e" stroke-width="0.95" fill="none"/></svg>
<div style="left:15.80px;top:196.77px;width:30.00px;height:8.56px;background:#bdfd84;"></div>
<div style="left:45.80px;top:196.77px;width:31.60px;height:8.56px;background:#fdfeff;"></div>
<div style="left:77.40px;top:196.77px;width:260.40px;height:8.56px;background:#bdfd84;"></div>
<div class="t" style="left:16.70px;top:196.15px;height:10px;line-height:10px;font-size:5.25px;color:#1d2a1d;letter-spacing:0.000px;">336</div>
<div class="t" style="left:78.40px;top:196.15px;height:10px;line-height:10px;font-size:5.17px;color:#1d2a1d;letter-spacing:-0.049px;white-space:pre;">Zúčtování s institucemi sociálního zabezpečení a zdravotního pojištění</div>
<svg style="left:58.90px;top:197.95px" width="5.8" height="5.8" viewBox="0 0 5.8 5.8"><rect x="0.3" y="0.3" width="5.2" height="5.2" fill="#fff" stroke="#bcc5ce" stroke-width="0.6"/><path d="M1.35 2.9L2.55 4.15L4.5 1.6" stroke="#2e2e2e" stroke-width="0.95" fill="none"/></svg>
<div style="left:15.80px;top:205.33px;width:30.00px;height:8.56px;background:#defdc0;"></div>
<div style="left:45.80px;top:205.33px;width:31.60px;height:8.56px;background:#f8fbff;"></div>
<div style="left:77.40px;top:205.33px;width:260.40px;height:8.56px;background:#defdc0;"></div>
<div class="t" style="left:16.70px;top:204.71px;height:10px;line-height:10px;font-size:5.25px;color:#1d2a1d;letter-spacing:0.000px;">336100</div>
<svg style="left:58.90px;top:206.51px" width="5.8" height="5.8" viewBox="0 0 5.8 5.8"><rect x="0.3" y="0.3" width="5.2" height="5.2" fill="#fff" stroke="#bcc5ce" stroke-width="0.6"/><path d="M1.35 2.9L2.55 4.15L4.5 1.6" stroke="#2e2e2e" stroke-width="0.95" fill="none"/></svg>
<div style="left:15.80px;top:213.89px;width:30.00px;height:8.56px;background:#bdfd84;"></div>
<div style="left:45.80px;top:213.89px;width:31.60px;height:8.56px;background:#fdfeff;"></div>
<div style="left:77.40px;top:213.89px;width:260.40px;height:8.56px;background:#bdfd84;"></div>
<div class="t" style="left:16.70px;top:213.27px;height:10px;line-height:10px;font-size:5.37px;color:#1d2a1d;letter-spacing:0.000px;">336110</div>
<svg style="left:58.90px;top:215.07px" width="5.8" height="5.8" viewBox="0 0 5.8 5.8"><rect x="0.3" y="0.3" width="5.2" height="5.2" fill="#fff" stroke="#bcc5ce" stroke-width="0.6"/><path d="M1.35 2.9L2.55 4.15L4.5 1.6" stroke="#2e2e2e" stroke-width="0.95" fill="none"/></svg>
<div style="left:15.80px;top:222.45px;width:30.00px;height:8.56px;background:#defdc0;"></div>
<div style="left:45.80px;top:222.45px;width:31.60px;height:8.56px;background:#f8fbff;"></div>
<div style="left:77.40px;top:222.45px;width:260.40px;height:8.56px;background:#defdc0;"></div>
<div class="t" style="left:16.70px;top:221.83px;height:10px;line-height:10px;font-size:5.25px;color:#1d2a1d;letter-spacing:0.000px;">336120</div>
<svg style="left:58.90px;top:223.63px" width="5.8" height="5.8" viewBox="0 0 5.8 5.8"><rect x="0.3" y="0.3" width="5.2" height="5.2" fill="#fff" stroke="#bcc5ce" stroke-width="0.6"/><path d="M1.35 2.9L2.55 4.15L4.5 1.6" stroke="#2e2e2e" stroke-width="0.95" fill="none"/></svg>
<div style="left:15.80px;top:231.01px;width:30.00px;height:8.56px;background:#bdfd84;"></div>
<div style="left:45.80px;top:231.01px;width:31.60px;height:8.56px;background:#fdfeff;"></div>
<div style="left:77.40px;top:231.01px;width:260.40px;height:8.56px;background:#bdfd84;"></div>
<div class="t" style="left:16.70px;top:230.39px;height:10px;line-height:10px;font-size:5.25px;color:#1d2a1d;letter-spacing:0.000px;">336130</div>
<svg style="left:58.90px;top:232.19px" width="5.8" height="5.8" viewBox="0 0 5.8 5.8"><rect x="0.3" y="0.3" width="5.2" height="5.2" fill="#fff" stroke="#bcc5ce" stroke-width="0.6"/><path d="M1.35 2.9L2.55 4.15L4.5 1.6" stroke="#2e2e2e" stroke-width="0.95" fill="none"/></svg>
<div style="left:15.80px;top:239.57px;width:30.00px;height:8.56px;background:#defdc0;"></div>
<div style="left:45.80px;top:239.57px;width:31.60px;height:8.56px;background:#f8fbff;"></div>
<div style="left:77.40px;top:239.57px;width:260.40px;height:8.56px;background:#defdc0;"></div>
<div class="t" style="left:16.70px;top:238.95px;height:10px;line-height:10px;font-size:5.25px;color:#1d2a1d;letter-spacing:0.000px;">336200</div>
<svg style="left:58.90px;top:240.75px" width="5.8" height="5.8" viewBox="0 0 5.8 5.8"><rect x="0.3" y="0.3" width="5.2" height="5.2" fill="#fff" stroke="#bcc5ce" stroke-width="0.6"/><path d="M1.35 2.9L2.55 4.15L4.5 1.6" stroke="#2e2e2e" stroke-width="0.95" fill="none"/></svg>
<div style="left:15.80px;top:248.13px;width:30.00px;height:8.56px;background:#bdfd84;"></div>
<div style="left:45.80px;top:248.13px;width:31.60px;height:8.56px;background:#fdfeff;"></div>
<div style="left:77.40px;top:248.13px;width:260.40px;height:8.56px;background:#bdfd84;"></div>
<div class="t" style="left:16.70px;top:247.51px;height:10px;line-height:10px;font-size:5.25px;color:#1d2a1d;letter-spacing:0.000px;">34</div>
<div class="t" style="left:78.40px;top:247.51px;height:10px;line-height:10px;font-size:5.17px;color:#1d2a1d;letter-spacing:-0.040px;white-space:pre;">Zúčtování daní a dotací</div>
<svg style="left:58.90px;top:249.31px" width="5.8" height="5.8" viewBox="0 0 5.8 5.8"><rect x="0.3" y="0.3" width="5.2" height="5.2" fill="#fff" stroke="#bcc5ce" stroke-width="0.6"/><path d="M1.35 2.9L2.55 4.15L4.5 1.6" stroke="#2e2e2e" stroke-width="0.95" fill="none"/></svg>
<div style="left:15.80px;top:256.69px;width:30.00px;height:8.56px;background:#defdc0;"></div>
<div style="left:45.80px;top:256.69px;width:31.60px;height:8.56px;background:#f8fbff;"></div>
<div style="left:77.40px;top:256.69px;width:260.40px;height:8.56px;background:#defdc0;"></div>
<div class="t" style="left:16.70px;top:256.07px;height:10px;line-height:10px;font-size:5.25px;color:#1d2a1d;letter-spacing:0.000px;">341</div>
<div class="t" style="left:78.40px;top:256.07px;height:10px;line-height:10px;font-size:5.17px;color:#1d2a1d;letter-spacing:-0.105px;white-space:pre;">Daň z příjmů</div>
<svg style="left:58.90px;top:257.87px" width="5.8" height="5.8" viewBox="0 0 5.8 5.8"><rect x="0.3" y="0.3" width="5.2" height="5.2" fill="#fff" stroke="#bcc5ce" stroke-width="0.6"/><path d="M1.35 2.9L2.55 4.15L4.5 1.6" stroke="#2e2e2e" stroke-width="0.95" fill="none"/></svg>
<div style="left:15.80px;top:265.25px;width:30.00px;height:8.56px;background:#bdfd84;"></div>
<div style="left:45.80px;top:265.25px;width:31.60px;height:8.56px;background:#fdfeff;"></div>
<div style="left:77.40px;top:265.25px;width:260.40px;height:8.56px;background:#bdfd84;"></div>
<div class="t" style="left:16.70px;top:264.63px;height:10px;line-height:10px;font-size:5.37px;color:#1d2a1d;letter-spacing:0.000px;">341100</div>
<svg style="left:58.90px;top:266.43px" width="5.8" height="5.8" viewBox="0 0 5.8 5.8"><rect x="0.3" y="0.3" width="5.2" height="5.2" fill="#fff" stroke="#bcc5ce" stroke-width="0.6"/><path d="M1.35 2.9L2.55 4.15L4.5 1.6" stroke="#2e2e2e" stroke-width="0.95" fill="none"/></svg>
<div style="left:15.80px;top:273.81px;width:30.00px;height:8.56px;background:#defdc0;"></div>
<div style="left:45.80px;top:273.81px;width:31.60px;height:8.56px;background:#f8fbff;"></div>
<div style="left:77.40px;top:273.81px;width:260.40px;height:8.56px;background:#defdc0;"></div>
<div class="t" style="left:16.70px;top:273.19px;height:10px;line-height:10px;font-size:5.25px;color:#1d2a1d;letter-spacing:0.000px;">342</div>
<div class="t" style="left:78.40px;top:273.19px;height:10px;line-height:10px;font-size:5.17px;color:#1d2a1d;letter-spacing:-0.065px;white-space:pre;">Ostatní přímé daně</div>
<svg style="left:58.90px;top:274.99px" width="5.8" height="5.8" viewBox="0 0 5.8 5.8"><rect x="0.3" y="0.3" width="5.2" height="5.2" fill="#fff" stroke="#bcc5ce" stroke-width="0.6"/><path d="M1.35 2.9L2.55 4.15L4.5 1.6" stroke="#2e2e2e" stroke-width="0.95" fill="none"/></svg>
<div style="left:45.50px;top:59.81px;width:0.60px;height:222.56px;background:rgba(255,255,255,.7);"></div>
<div style="left:77.10px;top:59.81px;width:0.60px;height:222.56px;background:rgba(255,255,255,.7);"></div>
<div style="left:337.80px;top:42.50px;width:8.20px;height:247.00px;background:#edf3fb;"></div>
<div style="left:337.80px;top:121.00px;width:8.20px;height:160.00px;background:#d9e6f5;"></div>
<svg style="left:339.40000000000003px;top:44.5px" width="5" height="4" viewBox="0 0 5 4"><path d="M0.6 3.2L2.5 1L4.4 3.2" stroke="#222" stroke-width="1.1" fill="none"/></svg>
<svg style="left:339.40000000000003px;top:284px" width="5" height="4" viewBox="0 0 5 4"><path d="M0.6 0.8L2.5 3L4.4 0.8" stroke="#222" stroke-width="1.1" fill="none"/></svg>
<div style="left:15.80px;top:289.50px;width:322.00px;height:9.00px;background:#f3f7fd;"></div>
<div style="left:23.80px;top:289.80px;width:8.50px;height:8.60px;background:#d3e1f1;"></div>
<svg style="left:17.80000000000001px;top:291.6px" width="4" height="5" viewBox="0 0 4 5"><path d="M3.2 0.6L1 2.5L3.2 4.4" stroke="#222" stroke-width="1.1" fill="none"/></svg>
<svg style="left:331.8px;top:291.6px" width="4" height="5" viewBox="0 0 4 5"><path d="M0.8 0.6L3 2.5L0.8 4.4" stroke="#222" stroke-width="1.1" fill="none"/></svg>
<div style="left:358.60px;top:23.00px;width:60.50px;height:8.80px;background:#dde9fb;"></div>
<div class="t" style="left:382.80px;top:22.50px;height:10px;line-height:10px;font-size:5.72px;color:#222;font-weight:bold;letter-spacing:0.089px;">2018</div>
<div style="left:358.60px;top:36.00px;width:60.50px;height:10.00px;background:#4a82b4;"></div>
<div class="t" style="left:375.30px;top:36.10px;height:10px;line-height:10px;font-size:5.36px;color:#fff;letter-spacing:-0.000px;">Názov účtu</div>
<div style="left:358.60px;top:49.30px;width:60.50px;height:10.20px;background:#4a82b4;"></div>
<div class="t" style="left:372.10px;top:49.50px;height:10px;line-height:10px;font-size:5.17px;color:#fff;letter-spacing:-0.027px;">Kontrola účtov</div>
<svg style="left:414.50px;top:52.60px" width="2.4" height="3.6" viewBox="0 0 2.4 3.6"><path d="M0.2 0.2L2.2 1.8L0.2 3.4Z" fill="#fff"/></svg>
<div style="left:358.60px;top:62.80px;width:60.50px;height:10.20px;background:#4f86b6;"></div>
<div class="t" style="left:371.60px;top:63.00px;height:10px;line-height:10px;font-size:5.17px;color:#7fa8cc;letter-spacing:-0.117px;">Tvorba analytík</div>
<div style="left:358.60px;top:76.00px;width:60.50px;height:10.40px;background:#4a82b4;"></div>
<div class="t" style="left:374.10px;top:76.30px;height:10px;line-height:10px;font-size:5.17px;color:#fff;letter-spacing:-0.075px;">Použitie účtu</div>
<svg style="left:414.50px;top:79.40px" width="2.4" height="3.6" viewBox="0 0 2.4 3.6"><path d="M0.2 0.2L2.2 1.8L0.2 3.4Z" fill="#fff"/></svg>
<div style="left:358.30px;top:294.60px;width:61.00px;height:9.90px;background:#4a82b4;"></div>
<div class="t" style="left:363.40px;top:294.65px;height:10px;line-height:10px;font-size:5.19px;color:#fff;letter-spacing:0.000px;">Doplnenie názvov účt</div>
<div style="left:355.10px;top:121.00px;width:227.00px;height:129.20px;background:#fff;border:0.9px solid #1c4a6b;box-sizing:border-box;"></div>
<div style="left:355.10px;top:121.00px;width:227.00px;height:12.70px;background:#1c4a6b;"></div>
<svg style="left:358.40000000000003px;top:123.6px" width="7" height="8" viewBox="0 0 7 8"><path d="M0.4 0.4L6.4 4L0.4 7.6Z" fill="#fff"/></svg>
<div class="t" style="left:367.40px;top:122.40px;height:10px;line-height:10px;font-size:5.62px;color:#fff;font-weight:bold;letter-spacing:0.000px;">Zoznam hospodárskych stredísk</div>
<div class="t" style="left:538.80px;top:122.20px;height:10px;line-height:10px;font-size:5.40px;color:#fff;font-weight:bold;">5</div>
<svg style="left:547.2px;top:123.4px" width="30" height="8" viewBox="0 0 30 8"><g stroke="#fff" stroke-width="0.8" fill="none"><path d="M0.6 4.2H5.2"/><rect x="12" y="1.6" width="4.4" height="4.8"/><path d="M23.6 1.6l4.4 4.8M28 1.6L23.6 6.4" stroke-width="1.2"/></g></svg>
<div style="left:360.80px;top:137.80px;width:149.60px;height:107.00px;background:#f0f5fd;border:0.6px solid #dbe6f4;box-sizing:border-box;"></div>
<div style="left:361.40px;top:138.40px;width:141.40px;height:8.20px;background:#fff;"></div>
<div class="t" style="left:362.40px;top:137.70px;height:10px;line-height:10px;font-size:5.12px;color:#222;letter-spacing:-0.035px;">Hospodárske stredisko</div>
<div class="t" style="left:422.00px;top:137.70px;height:10px;line-height:10px;font-size:5.12px;color:#222;letter-spacing:-0.004px;">Názov hospodárskeho strediska</div>
<div style="left:420.50px;top:138.40px;width:0.60px;height:8.20px;background:#e3e9f2;"></div>
<div style="left:361.40px;top:146.60px;width:141.40px;height:8.56px;background:#034b73;"></div>
<div style="left:361.40px;top:146.60px;width:59.40px;height:8.56px;background:#034b73;border:0.6px solid #c0392b;box-sizing:border-box;"></div>
<div class="t" style="left:362.80px;top:146.00px;height:10px;line-height:10px;font-size:5.50px;color:#fff;">100</div>
<div class="t" style="left:422.00px;top:146.00px;height:10px;line-height:10px;font-size:5.50px;color:#fff;">Správa</div>
<div style="left:361.40px;top:155.16px;width:59.40px;height:8.56px;background:#bdfd84;"></div>
<div style="left:420.80px;top:155.16px;width:82.00px;height:8.56px;background:#fff;"></div>
<div class="t" style="left:362.80px;top:154.56px;height:10px;line-height:10px;font-size:5.50px;color:#222;">200</div>
<div class="t" style="left:422.00px;top:154.56px;height:10px;line-height:10px;font-size:5.50px;color:#222;">Obchod</div>
<div style="left:361.40px;top:163.72px;width:59.40px;height:8.56px;background:#defdc0;"></div>
<div style="left:420.80px;top:163.72px;width:82.00px;height:8.56px;background:#f5f9ff;"></div>
<div class="t" style="left:362.80px;top:163.12px;height:10px;line-height:10px;font-size:5.50px;color:#222;">300</div>
<div class="t" style="left:422.00px;top:163.12px;height:10px;line-height:10px;font-size:5.50px;color:#222;">Výroba</div>
<div style="left:361.40px;top:172.28px;width:59.40px;height:8.56px;background:#bdfd84;"></div>
<div style="left:420.80px;top:172.28px;width:82.00px;height:8.56px;background:#fff;"></div>
<div class="t" style="left:362.80px;top:171.68px;height:10px;line-height:10px;font-size:5.50px;color:#222;">900</div>
<div class="t" style="left:422.00px;top:171.68px;height:10px;line-height:10px;font-size:5.50px;color:#222;">Nerozlišeno</div>
<div style="left:361.40px;top:180.84px;width:59.40px;height:8.56px;background:#defdc0;"></div>
<div style="left:420.80px;top:180.84px;width:82.00px;height:8.56px;background:#f5f9ff;"></div>
<div class="t" style="left:362.80px;top:180.24px;height:10px;line-height:10px;font-size:5.50px;color:#222;">400</div>
<div class="t" style="left:422.00px;top:180.24px;height:10px;line-height:10px;font-size:5.50px;color:#222;">Servis</div>
<div style="left:502.80px;top:138.40px;width:7.00px;height:97.00px;background:#eaf1fa;"></div>
<div style="left:502.80px;top:147.00px;width:7.00px;height:44.00px;background:#d6e3f3;"></div>
<svg style="left:503.90000000000003px;top:140.4px" width="5" height="4" viewBox="0 0 5 4"><path d="M0.6 3.2L2.5 1L4.4 3.2" stroke="#222" stroke-width="1.1" fill="none"/></svg>
<svg style="left:503.90000000000003px;top:230.2px" width="5" height="4" viewBox="0 0 5 4"><path d="M0.6 0.8L2.5 3L4.4 0.8" stroke="#222" stroke-width="1.1" fill="none"/></svg>
<div style="left:361.40px;top:235.60px;width:141.40px;height:8.60px;background:#f3f7fd;"></div>
<div style="left:369.80px;top:235.80px;width:8.40px;height:8.20px;background:#d3e1f1;"></div>
<svg style="left:363.40000000000003px;top:237.39999999999998px" width="4" height="5" viewBox="0 0 4 5"><path d="M3.2 0.6L1 2.5L3.2 4.4" stroke="#222" stroke-width="1.1" fill="none"/></svg>
<svg style="left:496.40000000000003px;top:237.39999999999998px" width="4" height="5" viewBox="0 0 4 5"><path d="M0.8 0.6L3 2.5L0.8 4.4" stroke="#222" stroke-width="1.1" fill="none"/></svg>
<div style="left:515.30px;top:137.60px;width:61.30px;height:10.20px;background:#4a82b4;"></div>
<div class="t" style="left:524.40px;top:137.80px;height:10px;line-height:10px;font-size:5.18px;color:#fff;letter-spacing:0.000px;">Štruktúra strediska</div>
<div style="left:515.30px;top:151.00px;width:61.30px;height:10.00px;background:#4a82b4;"></div>
<div class="t" style="left:521.40px;top:151.10px;height:10px;line-height:10px;font-size:5.21px;color:#fff;letter-spacing:0.000px;">Nadriadené stredisko</div>
<div style="left:515.30px;top:168.40px;width:61.30px;height:9.80px;background:#4f86b6;"></div>
<div class="t" style="left:525.00px;top:168.40px;height:10px;line-height:10px;font-size:5.17px;color:#7fa8cc;letter-spacing:-0.048px;">Následnícke stred.</div>
<div style="left:515.30px;top:181.60px;width:61.30px;height:10.00px;background:#4a82b4;"></div>
<div class="t" style="left:525.60px;top:181.70px;height:10px;line-height:10px;font-size:5.17px;color:#fff;letter-spacing:-0.018px;">Zrušené strediská</div>
<div style="left:515.30px;top:201.00px;width:61.30px;height:10.00px;background:#4a82b4;"></div>
<div class="t" style="left:529.50px;top:201.10px;height:10px;line-height:10px;font-size:5.17px;color:#fff;letter-spacing:-0.003px;">Údaje stredísk</div>
<div style="left:515.30px;top:214.00px;width:61.30px;height:10.00px;background:#4a82b4;"></div>
<div class="t" style="left:528.00px;top:214.10px;height:10px;line-height:10px;font-size:5.17px;color:#fff;letter-spacing:-0.015px;">Použité položky</div>
<div style="left:515.30px;top:227.30px;width:61.30px;height:10.00px;background:#4a82b4;"></div>
<div class="t" style="left:525.00px;top:227.40px;height:10px;line-height:10px;font-size:5.17px;color:#fff;letter-spacing:-0.000px;">Technol. strediska</div>
<div style="left:219.80px;top:315.80px;width:353.00px;height:147.00px;background:#fff;border-left:0.8px solid #d9d9d9;box-sizing:border-box;"></div>
<div style="left:219.80px;top:315.80px;width:353.00px;height:13.00px;background:#e8e8e8;"></div>
<svg style="left:222.40000000000003px;top:318.6px" width="7" height="8" viewBox="0 0 7 8"><path d="M0.5 0.8H4.6L6.4 2.6V7.4H0.5Z" fill="#fff" stroke="#d2d2d2" stroke-width="0.4"/><path d="M1.5 6L4.8 3.2" stroke="#9a9a9a" stroke-width="0.7"/></svg>
<div class="t" style="left:232.00px;top:317.60px;height:10px;line-height:10px;font-size:5.60px;color:#3a3a3a;font-weight:bold;letter-spacing:0.000px;">Účtovné obdobie</div>
<div class="t" style="left:529.40px;top:317.40px;height:10px;line-height:10px;font-size:5.20px;color:#444;font-weight:bold;">12</div>
<svg style="left:538.4px;top:318.6px" width="30" height="8" viewBox="0 0 30 8"><g stroke="#111" stroke-width="0.8" fill="none"><path d="M0.6 4.2H5.2"/><rect x="12" y="1.6" width="4.4" height="4.8"/><path d="M23.6 1.6l4.4 4.8M28 1.6L23.6 6.4" stroke-width="1.2"/></g></svg>
<div style="left:226.00px;top:332.90px;width:341.20px;height:124.00px;background:#f3f7fd;border:0.6px solid #dbe6f4;box-sizing:border-box;"></div>
<div style="left:226.60px;top:333.50px;width:331.80px;height:8.30px;background:#fff;"></div>
<div class="t" style="left:227.50px;top:332.90px;height:10px;line-height:10px;font-size:5.12px;color:#222;letter-spacing:-0.011px;">Skratka</div>
<div class="t" style="left:246.60px;top:332.90px;height:10px;line-height:10px;font-size:5.15px;color:#222;letter-spacing:0.000px;">Názov účtovného obdobia</div>
<div style="left:245.50px;top:333.50px;width:0.60px;height:8.30px;background:#e3e9f2;"></div>
<div class="t" style="left:312.30px;top:332.90px;height:10px;line-height:10px;font-size:5.27px;color:#222;letter-spacing:-0.000px;">Začiatok účtovného o...</div>
<div style="left:310.50px;top:333.50px;width:0.60px;height:8.30px;background:#e3e9f2;"></div>
<div class="t" style="left:370.80px;top:332.90px;height:10px;line-height:10px;font-size:5.20px;color:#222;letter-spacing:0.000px;">Koniec účtovného o...</div>
<div style="left:368.80px;top:333.50px;width:0.60px;height:8.30px;background:#e3e9f2;"></div>
<div class="t" style="left:424.10px;top:332.90px;height:10px;line-height:10px;font-size:5.27px;color:#222;letter-spacing:0.000px;">Dátum uzávi...</div>
<div style="left:422.50px;top:333.50px;width:0.60px;height:8.30px;background:#e3e9f2;"></div>
<div class="t" style="left:460.80px;top:332.90px;height:10px;line-height:10px;font-size:5.30px;color:#222;letter-spacing:0.000px;">Uzavretie počiatočných s...</div>
<div style="left:459.50px;top:333.50px;width:0.60px;height:8.30px;background:#e3e9f2;"></div>
<div class="t" style="left:526.10px;top:332.90px;height:10px;line-height:10px;font-size:5.12px;color:#222;letter-spacing:-0.134px;">Uzávierka</div>
<div style="left:524.00px;top:333.50px;width:0.60px;height:8.30px;background:#e3e9f2;"></div>
<div style="left:556.10px;top:333.50px;width:0.60px;height:8.30px;background:#e3e9f2;"></div>
<div style="left:226.60px;top:341.80px;width:331.80px;height:8.60px;background:#e3eeff;"></div>
<div class="t" style="left:233.10px;top:341.20px;height:10px;line-height:10px;font-size:5.26px;color:#222;letter-spacing:0.000px;">2007</div>
<div class="t" style="left:246.60px;top:341.20px;height:10px;line-height:10px;font-size:5.17px;color:#222;letter-spacing:-0.084px;">Účetní období 2007</div>
<div class="t" style="left:312.10px;top:341.20px;height:10px;line-height:10px;font-size:5.29px;color:#222;letter-spacing:0.000px;">01.01.2007</div>
<div class="t" style="left:370.40px;top:341.20px;height:10px;line-height:10px;font-size:5.27px;color:#222;letter-spacing:0.000px;">31.12.2007</div>
<div class="t" style="left:424.10px;top:341.20px;height:10px;line-height:10px;font-size:5.25px;color:#222;letter-spacing:0.000px;">31.12.2007</div>
<svg style="left:489.00px;top:343.00px" width="5.8" height="5.8" viewBox="0 0 5.8 5.8"><rect x="0.3" y="0.3" width="5.2" height="5.2" fill="#f6f9fe" stroke="#c9d1dc" stroke-width="0.6"/><rect x="2.2" y="2.2" width="1.4" height="1.4" fill="#9aa3b0"/></svg>
<svg style="left:537.00px;top:343.00px" width="5.8" height="5.8" viewBox="0 0 5.8 5.8"><rect x="0.3" y="0.3" width="5.2" height="5.2" fill="#f6f9fe" stroke="#c9d1dc" stroke-width="0.6"/><path d="M1.35 2.9L2.55 4.15L4.5 1.6" stroke="#9aa3b0" stroke-width="0.95" fill="none"/></svg>
<div class="t" style="left:556.80px;top:341.20px;height:10px;line-height:10px;font-size:5.50px;color:#222;width:1.70px;text-align:left;overflow:hidden;">5</div>
<div style="left:226.60px;top:350.40px;width:331.80px;height:8.60px;background:#cfdefc;"></div>
<div class="t" style="left:233.10px;top:349.80px;height:10px;line-height:10px;font-size:5.26px;color:#222;letter-spacing:0.000px;">2008</div>
<div class="t" style="left:246.60px;top:349.80px;height:10px;line-height:10px;font-size:5.17px;color:#222;letter-spacing:-0.084px;">Účetní období 2008</div>
<div class="t" style="left:312.10px;top:349.80px;height:10px;line-height:10px;font-size:5.29px;color:#222;letter-spacing:0.000px;">01.01.2008</div>
<div class="t" style="left:370.40px;top:349.80px;height:10px;line-height:10px;font-size:5.27px;color:#222;letter-spacing:0.000px;">31.12.2008</div>
<div class="t" style="left:424.10px;top:349.80px;height:10px;line-height:10px;font-size:5.25px;color:#222;letter-spacing:0.000px;">31.12.2008</div>
<svg style="left:489.00px;top:351.60px" width="5.8" height="5.8" viewBox="0 0 5.8 5.8"><rect x="0.3" y="0.3" width="5.2" height="5.2" fill="#f6f9fe" stroke="#c9d1dc" stroke-width="0.6"/><path d="M1.35 2.9L2.55 4.15L4.5 1.6" stroke="#9aa3b0" stroke-width="0.95" fill="none"/></svg>
<svg style="left:537.00px;top:351.60px" width="5.8" height="5.8" viewBox="0 0 5.8 5.8"><rect x="0.3" y="0.3" width="5.2" height="5.2" fill="#f6f9fe" stroke="#c9d1dc" stroke-width="0.6"/><path d="M1.35 2.9L2.55 4.15L4.5 1.6" stroke="#9aa3b0" stroke-width="0.95" fill="none"/></svg>
<div class="t" style="left:556.80px;top:349.80px;height:10px;line-height:10px;font-size:5.50px;color:#222;width:1.70px;text-align:left;overflow:hidden;">5</div>
<div style="left:226.60px;top:359.00px;width:331.80px;height:8.60px;background:#e3eeff;"></div>
<div class="t" style="left:233.10px;top:358.40px;height:10px;line-height:10px;font-size:5.26px;color:#222;letter-spacing:0.000px;">2009</div>
<div class="t" style="left:246.60px;top:358.40px;height:10px;line-height:10px;font-size:5.17px;color:#222;letter-spacing:-0.084px;">Účetní období 2009</div>
<div class="t" style="left:312.10px;top:358.40px;height:10px;line-height:10px;font-size:5.29px;color:#222;letter-spacing:0.000px;">01.01.2009</div>
<div class="t" style="left:370.40px;top:358.40px;height:10px;line-height:10px;font-size:5.27px;color:#222;letter-spacing:0.000px;">31.12.2009</div>
<div class="t" style="left:424.10px;top:358.40px;height:10px;line-height:10px;font-size:5.25px;color:#222;letter-spacing:0.000px;">31.12.2009</div>
<svg style="left:489.00px;top:360.20px" width="5.8" height="5.8" viewBox="0 0 5.8 5.8"><rect x="0.3" y="0.3" width="5.2" height="5.2" fill="#f6f9fe" stroke="#c9d1dc" stroke-width="0.6"/><path d="M1.35 2.9L2.55 4.15L4.5 1.6" stroke="#9aa3b0" stroke-width="0.95" fill="none"/></svg>
<svg style="left:537.00px;top:360.20px" width="5.8" height="5.8" viewBox="0 0 5.8 5.8"><rect x="0.3" y="0.3" width="5.2" height="5.2" fill="#f6f9fe" stroke="#c9d1dc" stroke-width="0.6"/><path d="M1.35 2.9L2.55 4.15L4.5 1.6" stroke="#9aa3b0" stroke-width="0.95" fill="none"/></svg>
<div class="t" style="left:556.80px;top:358.40px;height:10px;line-height:10px;font-size:5.50px;color:#222;width:1.70px;text-align:left;overflow:hidden;">5</div>
<div style="left:226.60px;top:367.60px;width:331.80px;height:8.60px;background:#cfdefc;"></div>
<div class="t" style="left:233.10px;top:367.00px;height:10px;line-height:10px;font-size:5.26px;color:#222;letter-spacing:0.000px;">2010</div>
<div class="t" style="left:246.60px;top:367.00px;height:10px;line-height:10px;font-size:5.17px;color:#222;letter-spacing:-0.084px;">Účetní období 2010</div>
<div class="t" style="left:312.10px;top:367.00px;height:10px;line-height:10px;font-size:5.29px;color:#222;letter-spacing:0.000px;">01.01.2010</div>
<div class="t" style="left:370.40px;top:367.00px;height:10px;line-height:10px;font-size:5.27px;color:#222;letter-spacing:0.000px;">31.12.2010</div>
<div class="t" style="left:424.10px;top:367.00px;height:10px;line-height:10px;font-size:5.25px;color:#222;letter-spacing:0.000px;">31.12.2010</div>
<svg style="left:489.00px;top:368.80px" width="5.8" height="5.8" viewBox="0 0 5.8 5.8"><rect x="0.3" y="0.3" width="5.2" height="5.2" fill="#f6f9fe" stroke="#c9d1dc" stroke-width="0.6"/><path d="M1.35 2.9L2.55 4.15L4.5 1.6" stroke="#9aa3b0" stroke-width="0.95" fill="none"/></svg>
<svg style="left:537.00px;top:368.80px" width="5.8" height="5.8" viewBox="0 0 5.8 5.8"><rect x="0.3" y="0.3" width="5.2" height="5.2" fill="#f6f9fe" stroke="#c9d1dc" stroke-width="0.6"/><path d="M1.35 2.9L2.55 4.15L4.5 1.6" stroke="#9aa3b0" stroke-width="0.95" fill="none"/></svg>
<div class="t" style="left:556.80px;top:367.00px;height:10px;line-height:10px;font-size:5.50px;color:#222;width:1.70px;text-align:left;overflow:hidden;">5</div>
<div style="left:226.60px;top:376.20px;width:331.80px;height:8.60px;background:#e3eeff;"></div>
<div class="t" style="left:233.10px;top:375.60px;height:10px;line-height:10px;font-size:5.44px;color:#222;letter-spacing:0.000px;">2011</div>
<div class="t" style="left:246.60px;top:375.60px;height:10px;line-height:10px;font-size:5.17px;color:#222;letter-spacing:-0.061px;">Účetní období 2011</div>
<div class="t" style="left:312.10px;top:375.60px;height:10px;line-height:10px;font-size:5.37px;color:#222;letter-spacing:0.000px;">01.01.2011</div>
<div class="t" style="left:370.40px;top:375.60px;height:10px;line-height:10px;font-size:5.35px;color:#222;letter-spacing:0.000px;">31.12.2011</div>
<div class="t" style="left:424.10px;top:375.60px;height:10px;line-height:10px;font-size:5.33px;color:#222;letter-spacing:0.000px;">31.12.2011</div>
<svg style="left:489.00px;top:377.40px" width="5.8" height="5.8" viewBox="0 0 5.8 5.8"><rect x="0.3" y="0.3" width="5.2" height="5.2" fill="#f6f9fe" stroke="#c9d1dc" stroke-width="0.6"/><path d="M1.35 2.9L2.55 4.15L4.5 1.6" stroke="#9aa3b0" stroke-width="0.95" fill="none"/></svg>
<svg style="left:537.00px;top:377.40px" width="5.8" height="5.8" viewBox="0 0 5.8 5.8"><rect x="0.3" y="0.3" width="5.2" height="5.2" fill="#f6f9fe" stroke="#c9d1dc" stroke-width="0.6"/><path d="M1.35 2.9L2.55 4.15L4.5 1.6" stroke="#9aa3b0" stroke-width="0.95" fill="none"/></svg>
<div class="t" style="left:556.80px;top:375.60px;height:10px;line-height:10px;font-size:5.50px;color:#222;width:1.70px;text-align:left;overflow:hidden;">5</div>
<div style="left:226.60px;top:384.80px;width:331.80px;height:8.60px;background:#cfdefc;"></div>
<div class="t" style="left:233.10px;top:384.20px;height:10px;line-height:10px;font-size:5.26px;color:#222;letter-spacing:0.000px;">2012</div>
<div class="t" style="left:246.60px;top:384.20px;height:10px;line-height:10px;font-size:5.17px;color:#222;letter-spacing:-0.084px;">Účetní období 2012</div>
<div class="t" style="left:312.10px;top:384.20px;height:10px;line-height:10px;font-size:5.29px;color:#222;letter-spacing:0.000px;">01.01.2012</div>
<div class="t" style="left:370.40px;top:384.20px;height:10px;line-height:10px;font-size:5.27px;color:#222;letter-spacing:0.000px;">31.12.2012</div>
<div class="t" style="left:424.10px;top:384.20px;height:10px;line-height:10px;font-size:5.25px;color:#222;letter-spacing:0.000px;">31.12.2012</div>
<svg style="left:489.00px;top:386.00px" width="5.8" height="5.8" viewBox="0 0 5.8 5.8"><rect x="0.3" y="0.3" width="5.2" height="5.2" fill="#f6f9fe" stroke="#c9d1dc" stroke-width="0.6"/><path d="M1.35 2.9L2.55 4.15L4.5 1.6" stroke="#9aa3b0" stroke-width="0.95" fill="none"/></svg>
<svg style="left:537.00px;top:386.00px" width="5.8" height="5.8" viewBox="0 0 5.8 5.8"><rect x="0.3" y="0.3" width="5.2" height="5.2" fill="#f6f9fe" stroke="#c9d1dc" stroke-width="0.6"/><path d="M1.35 2.9L2.55 4.15L4.5 1.6" stroke="#9aa3b0" stroke-width="0.95" fill="none"/></svg>
<div class="t" style="left:556.80px;top:384.20px;height:10px;line-height:10px;font-size:5.50px;color:#222;width:1.70px;text-align:left;overflow:hidden;">5</div>
<div style="left:226.60px;top:393.40px;width:331.80px;height:8.60px;background:#e3eeff;"></div>
<div class="t" style="left:233.10px;top:392.80px;height:10px;line-height:10px;font-size:5.26px;color:#222;letter-spacing:0.000px;">2013</div>
<div class="t" style="left:246.60px;top:392.80px;height:10px;line-height:10px;font-size:5.17px;color:#222;letter-spacing:-0.084px;">Účetní období 2013</div>
<div class="t" style="left:312.10px;top:392.80px;height:10px;line-height:10px;font-size:5.29px;color:#222;letter-spacing:0.000px;">01.01.2013</div>
<div class="t" style="left:370.40px;top:392.80px;height:10px;line-height:10px;font-size:5.27px;color:#222;letter-spacing:0.000px;">31.12.2013</div>
<div class="t" style="left:424.10px;top:392.80px;height:10px;line-height:10px;font-size:5.25px;color:#222;letter-spacing:0.000px;">31.12.2013</div>
<svg style="left:489.00px;top:394.60px" width="5.8" height="5.8" viewBox="0 0 5.8 5.8"><rect x="0.3" y="0.3" width="5.2" height="5.2" fill="#f6f9fe" stroke="#c9d1dc" stroke-width="0.6"/><path d="M1.35 2.9L2.55 4.15L4.5 1.6" stroke="#9aa3b0" stroke-width="0.95" fill="none"/></svg>
<svg style="left:537.00px;top:394.60px" width="5.8" height="5.8" viewBox="0 0 5.8 5.8"><rect x="0.3" y="0.3" width="5.2" height="5.2" fill="#f6f9fe" stroke="#c9d1dc" stroke-width="0.6"/><path d="M1.35 2.9L2.55 4.15L4.5 1.6" stroke="#9aa3b0" stroke-width="0.95" fill="none"/></svg>
<div class="t" style="left:556.80px;top:392.80px;height:10px;line-height:10px;font-size:5.50px;color:#222;width:1.70px;text-align:left;overflow:hidden;">5</div>
<div style="left:226.60px;top:402.00px;width:331.80px;height:8.60px;background:#cfdefc;"></div>
<div class="t" style="left:233.10px;top:401.40px;height:10px;line-height:10px;font-size:5.26px;color:#222;letter-spacing:0.000px;">2014</div>
<div class="t" style="left:246.60px;top:401.40px;height:10px;line-height:10px;font-size:5.17px;color:#222;letter-spacing:-0.084px;">Účetní období 2014</div>
<div class="t" style="left:312.10px;top:401.40px;height:10px;line-height:10px;font-size:5.29px;color:#222;letter-spacing:0.000px;">01.01.2014</div>
<div class="t" style="left:370.40px;top:401.40px;height:10px;line-height:10px;font-size:5.27px;color:#222;letter-spacing:0.000px;">31.12.2014</div>
<div class="t" style="left:424.10px;top:401.40px;height:10px;line-height:10px;font-size:5.25px;color:#222;letter-spacing:0.000px;">31.12.2014</div>
<svg style="left:489.00px;top:403.20px" width="5.8" height="5.8" viewBox="0 0 5.8 5.8"><rect x="0.3" y="0.3" width="5.2" height="5.2" fill="#f6f9fe" stroke="#c9d1dc" stroke-width="0.6"/><path d="M1.35 2.9L2.55 4.15L4.5 1.6" stroke="#9aa3b0" stroke-width="0.95" fill="none"/></svg>
<svg style="left:537.00px;top:403.20px" width="5.8" height="5.8" viewBox="0 0 5.8 5.8"><rect x="0.3" y="0.3" width="5.2" height="5.2" fill="#f6f9fe" stroke="#c9d1dc" stroke-width="0.6"/><path d="M1.35 2.9L2.55 4.15L4.5 1.6" stroke="#9aa3b0" stroke-width="0.95" fill="none"/></svg>
<div class="t" style="left:556.80px;top:401.40px;height:10px;line-height:10px;font-size:5.50px;color:#222;width:1.70px;text-align:left;overflow:hidden;">5</div>
<div style="left:226.60px;top:410.60px;width:331.80px;height:8.60px;background:#e3eeff;"></div>
<div class="t" style="left:233.10px;top:410.00px;height:10px;line-height:10px;font-size:5.26px;color:#222;letter-spacing:0.000px;">2015</div>
<div class="t" style="left:246.60px;top:410.00px;height:10px;line-height:10px;font-size:5.17px;color:#222;letter-spacing:-0.084px;">Účetní období 2015</div>
<div class="t" style="left:312.10px;top:410.00px;height:10px;line-height:10px;font-size:5.29px;color:#222;letter-spacing:0.000px;">01.01.2015</div>
<div class="t" style="left:370.40px;top:410.00px;height:10px;line-height:10px;font-size:5.27px;color:#222;letter-spacing:0.000px;">31.12.2015</div>
<div class="t" style="left:424.10px;top:410.00px;height:10px;line-height:10px;font-size:5.25px;color:#222;letter-spacing:0.000px;">31.12.2015</div>
<svg style="left:489.00px;top:411.80px" width="5.8" height="5.8" viewBox="0 0 5.8 5.8"><rect x="0.3" y="0.3" width="5.2" height="5.2" fill="#f6f9fe" stroke="#c9d1dc" stroke-width="0.6"/><path d="M1.35 2.9L2.55 4.15L4.5 1.6" stroke="#9aa3b0" stroke-width="0.95" fill="none"/></svg>
<svg style="left:537.00px;top:411.80px" width="5.8" height="5.8" viewBox="0 0 5.8 5.8"><rect x="0.3" y="0.3" width="5.2" height="5.2" fill="#f6f9fe" stroke="#c9d1dc" stroke-width="0.6"/><path d="M1.35 2.9L2.55 4.15L4.5 1.6" stroke="#9aa3b0" stroke-width="0.95" fill="none"/></svg>
<div class="t" style="left:556.80px;top:410.00px;height:10px;line-height:10px;font-size:5.50px;color:#222;width:1.70px;text-align:left;overflow:hidden;">5</div>
<div style="left:226.60px;top:419.20px;width:331.80px;height:8.60px;background:#cfdefc;"></div>
<div class="t" style="left:233.10px;top:418.60px;height:10px;line-height:10px;font-size:5.26px;color:#222;letter-spacing:0.000px;">2016</div>
<div class="t" style="left:246.60px;top:418.60px;height:10px;line-height:10px;font-size:5.17px;color:#222;letter-spacing:-0.084px;">Účetní období 2016</div>
<div class="t" style="left:312.10px;top:418.60px;height:10px;line-height:10px;font-size:5.29px;color:#222;letter-spacing:0.000px;">01.01.2016</div>
<div class="t" style="left:370.40px;top:418.60px;height:10px;line-height:10px;font-size:5.27px;color:#222;letter-spacing:0.000px;">31.12.2016</div>
<div class="t" style="left:424.10px;top:418.60px;height:10px;line-height:10px;font-size:5.25px;color:#222;letter-spacing:0.000px;">31.12.2016</div>
<svg style="left:489.00px;top:420.40px" width="5.8" height="5.8" viewBox="0 0 5.8 5.8"><rect x="0.3" y="0.3" width="5.2" height="5.2" fill="#f6f9fe" stroke="#c9d1dc" stroke-width="0.6"/><path d="M1.35 2.9L2.55 4.15L4.5 1.6" stroke="#9aa3b0" stroke-width="0.95" fill="none"/></svg>
<svg style="left:537.00px;top:420.40px" width="5.8" height="5.8" viewBox="0 0 5.8 5.8"><rect x="0.3" y="0.3" width="5.2" height="5.2" fill="#f6f9fe" stroke="#c9d1dc" stroke-width="0.6"/><path d="M1.35 2.9L2.55 4.15L4.5 1.6" stroke="#9aa3b0" stroke-width="0.95" fill="none"/></svg>
<div class="t" style="left:556.80px;top:418.60px;height:10px;line-height:10px;font-size:5.50px;color:#222;width:1.70px;text-align:left;overflow:hidden;">5</div>
<div style="left:226.60px;top:427.80px;width:331.80px;height:8.60px;background:#034b73;"></div>
<div class="t" style="left:233.10px;top:427.20px;height:10px;line-height:10px;font-size:5.26px;color:#fff;letter-spacing:0.000px;">2017</div>
<div class="t" style="left:246.60px;top:427.20px;height:10px;line-height:10px;font-size:5.17px;color:#fff;letter-spacing:-0.084px;">Účetní období 2017</div>
<div class="t" style="left:312.10px;top:427.20px;height:10px;line-height:10px;font-size:5.29px;color:#fff;letter-spacing:0.000px;">01.01.2017</div>
<div class="t" style="left:370.40px;top:427.20px;height:10px;line-height:10px;font-size:5.27px;color:#fff;letter-spacing:0.000px;">31.12.2017</div>
<svg style="left:489.00px;top:429.00px" width="5.8" height="5.8" viewBox="0 0 5.8 5.8"><rect x="0.3" y="0.3" width="5.2" height="5.2" fill="#7c9db3" stroke="#9fb7c8" stroke-width="0.6"/><path d="M1.35 2.9L2.55 4.15L4.5 1.6" stroke="#e8eef4" stroke-width="0.95" fill="none"/></svg>
<svg style="left:537.00px;top:429.00px" width="5.8" height="5.8" viewBox="0 0 5.8 5.8"><rect x="0.3" y="0.3" width="5.2" height="5.2" fill="#7c9db3" stroke="#9fb7c8" stroke-width="0.6"/><rect x="2.2" y="2.2" width="1.4" height="1.4" fill="#e8eef4"/></svg>
<div class="t" style="left:556.80px;top:427.20px;height:10px;line-height:10px;font-size:5.50px;color:#dde;width:1.70px;text-align:left;overflow:hidden;">5</div>
<div style="left:226.60px;top:436.40px;width:331.80px;height:8.60px;background:#cfdefc;"></div>
<div style="left:226.60px;top:436.40px;width:19.20px;height:8.60px;background:#bdfd84;"></div>
<div style="left:310.80px;top:436.40px;width:112.00px;height:8.60px;background:#bdfd84;"></div>
<div style="left:245.80px;top:436.40px;width:65.00px;height:8.60px;background:#f7faff;"></div>
<div style="left:556.40px;top:436.40px;width:2.00px;height:8.60px;background:#bdfd84;"></div>
<div class="t" style="left:233.10px;top:435.80px;height:10px;line-height:10px;font-size:5.26px;color:#222;letter-spacing:0.000px;">2018</div>
<div class="t" style="left:246.60px;top:435.80px;height:10px;line-height:10px;font-size:5.17px;color:#222;letter-spacing:-0.084px;">Účetní období 2018</div>
<div class="t" style="left:312.10px;top:435.80px;height:10px;line-height:10px;font-size:5.29px;color:#222;letter-spacing:0.000px;">01.01.2018</div>
<div class="t" style="left:370.40px;top:435.80px;height:10px;line-height:10px;font-size:5.27px;color:#222;letter-spacing:0.000px;">31.12.2018</div>
<svg style="left:489.00px;top:437.60px" width="5.8" height="5.8" viewBox="0 0 5.8 5.8"><rect x="0.3" y="0.3" width="5.2" height="5.2" fill="#f6f9fe" stroke="#c9d1dc" stroke-width="0.6"/><rect x="2.2" y="2.2" width="1.4" height="1.4" fill="#9aa3b0"/></svg>
<svg style="left:537.00px;top:437.60px" width="5.8" height="5.8" viewBox="0 0 5.8 5.8"><rect x="0.3" y="0.3" width="5.2" height="5.2" fill="#f6f9fe" stroke="#c9d1dc" stroke-width="0.6"/><rect x="2.2" y="2.2" width="1.4" height="1.4" fill="#9aa3b0"/></svg>
<div class="t" style="left:556.80px;top:435.80px;height:10px;line-height:10px;font-size:5.50px;color:#222;width:1.70px;text-align:left;overflow:hidden;">5</div>
<div style="left:245.50px;top:341.80px;width:0.60px;height:103.20px;background:rgba(255,255,255,.35);"></div>
<div style="left:310.50px;top:341.80px;width:0.60px;height:103.20px;background:rgba(255,255,255,.35);"></div>
<div style="left:368.80px;top:341.80px;width:0.60px;height:103.20px;background:rgba(255,255,255,.35);"></div>
<div style="left:422.50px;top:341.80px;width:0.60px;height:103.20px;background:rgba(255,255,255,.35);"></div>
<div style="left:459.50px;top:341.80px;width:0.60px;height:103.20px;background:rgba(255,255,255,.35);"></div>
<div style="left:524.00px;top:341.80px;width:0.60px;height:103.20px;background:rgba(255,255,255,.35);"></div>
<div style="left:556.10px;top:341.80px;width:0.60px;height:103.20px;background:rgba(255,255,255,.35);"></div>
<div style="left:558.40px;top:333.50px;width:8.20px;height:111.50px;background:#f1f6fb;"></div>
<div style="left:558.40px;top:385.00px;width:8.20px;height:50.80px;background:#d8e5f1;"></div>
<svg style="left:560.0999999999999px;top:335.6px" width="5" height="4" viewBox="0 0 5 4"><path d="M0.6 3.2L2.5 1L4.4 3.2" stroke="#222" stroke-width="1.1" fill="none"/></svg>
<svg style="left:560.0999999999999px;top:442.6px" width="5" height="4" viewBox="0 0 5 4"><path d="M0.6 0.8L2.5 3L4.4 0.8" stroke="#222" stroke-width="1.1" fill="none"/></svg>
<div style="left:226.60px;top:445.20px;width:331.80px;height:11.20px;background:#f5f8fc;"></div>
<div style="left:234.80px;top:448.00px;width:8.00px;height:8.20px;background:#d3e1f1;"></div>
<svg style="left:228.40000000000003px;top:449.6px" width="4" height="5" viewBox="0 0 4 5"><path d="M3.2 0.6L1 2.5L3.2 4.4" stroke="#222" stroke-width="1.1" fill="none"/></svg>
<svg style="left:552.4000000000001px;top:449.6px" width="4" height="5" viewBox="0 0 4 5"><path d="M0.8 0.6L3 2.5L0.8 4.4" stroke="#222" stroke-width="1.1" fill="none"/></svg>
</div>
<div style="left:0.00px;top:498.75px;width:800.00px;height:1.25px;background:#0a0a0a;"></div>
</body></html>
